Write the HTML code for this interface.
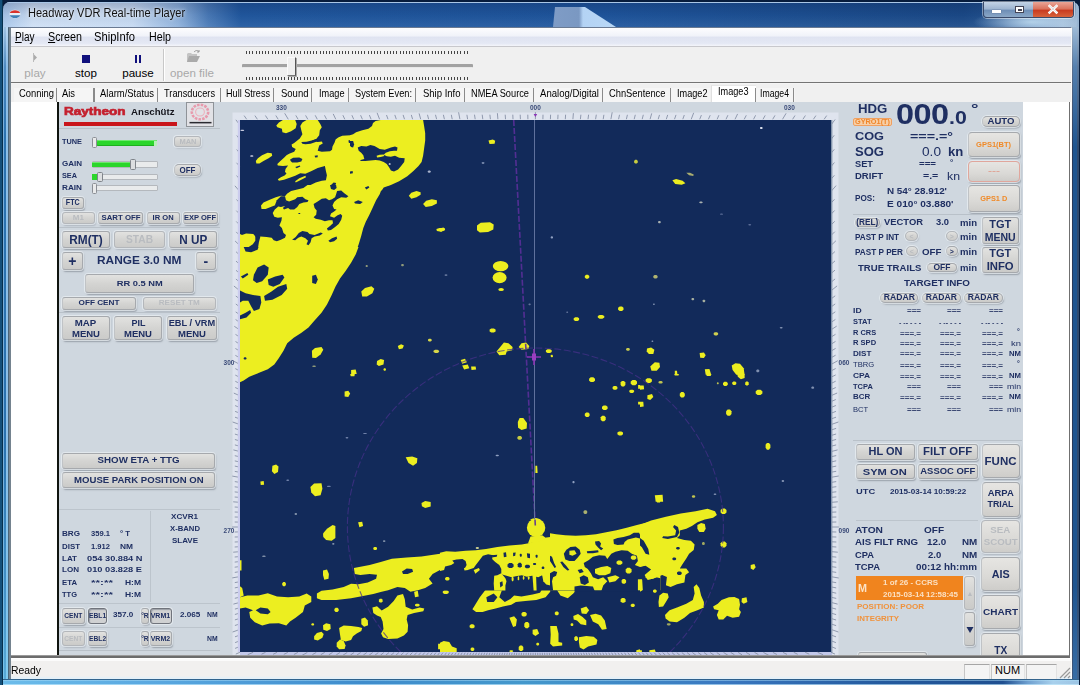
<!DOCTYPE html>
<html lang="en"><head><meta charset="utf-8"><title>Headway VDR Real-time Player</title>
<style>
*{box-sizing:content-box}
html,body{margin:0;padding:0}
body{width:1080px;height:685px;overflow:hidden;position:relative;background:#071c3c;font-family:"Liberation Sans",sans-serif;font-size:12px;color:#000}
#frame{position:absolute;left:3px;top:2px;width:1076px;height:683px;border-radius:7px 7px 0 0;
 background:
  linear-gradient(90deg,#a9c8ec 0,#cfe0f5 30px,#c6daf2 130px,#8fb2dc 175px,#4a7bb8 205px,#2159a0 238px,#1f569d 600px,#1d5092 800px,#1b4a88 960px,#245490 1000px,#5f8cbc 1030px,#9dbad6 1060px,#9ab6d2 1075px);
 box-shadow:inset 0 1px 0 #a9c6e6}
#tshade{position:absolute;left:3px;top:3px;width:1073px;height:24px;background:linear-gradient(180deg,rgba(0,10,50,.2) 0,rgba(0,10,50,.05) 50%,rgba(255,255,255,.06) 100%)}
#tblob{position:absolute;left:553px;top:7px;width:63px;height:20px;background:linear-gradient(90deg,#7f9cc6 0,#7a98c2 26px,#b4d3f4 30px,#b9d8f6 100%);clip-path:polygon(2px 0,32px 0,63px 20px,0 20px);filter:blur(.7px)}
#capglow{position:absolute;left:960px;top:10px;width:130px;height:24px;background:radial-gradient(ellipse closest-side at 55% 50%,rgba(200,226,244,.8) 0,rgba(190,215,238,.5) 50%,rgba(160,190,220,0) 100%);clip-path:inset(0 13px 7px 0)}
#frame:before{content:"";position:absolute;left:0;top:25px;width:5px;bottom:0;
 background:linear-gradient(180deg,rgba(200,222,244,.75) 0,rgba(140,180,225,.35) 40px,rgba(0,0,0,0) 110px,rgba(0,0,0,0) 420px,rgba(110,200,240,.35) 560px,rgba(120,210,245,.6) 660px),
            linear-gradient(90deg,#7ab0dc 0,#7ab0dc 1px,#2a72b0 1.2px,#2a72b0 2.9px,#8cc0e8 3.3px,#8cc0e8 5px)}
#frame:after{content:"";position:absolute;right:0;top:25px;width:7px;bottom:0;
 background:linear-gradient(180deg,rgba(190,212,232,.8) 0,rgba(150,180,212,.45) 40px,rgba(0,0,0,0) 120px,rgba(0,0,0,0) 560px,rgba(120,170,220,.3) 660px),
            linear-gradient(90deg,#2a3a5a 0,#2a3a5a 1px,#1f5590 1.4px,#1f5590 4.6px,#304a6e 5.2px,#304a6e 7px)}
#outL{position:absolute;left:0;top:0;width:3px;height:685px;background:linear-gradient(90deg,#14507a 0,#14507a 1.5px,#06304e 1.8px,#06304e 3px)}
#cl2{position:absolute;left:9px;top:28px;width:1.7px;height:651px;background:#74838f}
#bframe{position:absolute;left:3px;top:678.6px;width:1076px;height:6.4px;
 background:linear-gradient(180deg,rgba(44,92,132,.9) 0,rgba(44,92,132,.9) 1px,rgba(170,220,246,.5) 1px,rgba(170,220,246,.5) 2px,rgba(0,0,0,0) 2px,rgba(0,0,0,0) 4.9px,rgba(205,240,255,.6) 4.9px),
 linear-gradient(90deg,#6cbcea 0,#5aa8e0 150px,#3f8ccc 360px,#4498cc 520px,#3a78c0 720px,#245a9e 880px,#1f4f90 1000px,#6fa0d0 1025px,#a8d0ec 1050px,#9cc4e4 1076px)}
 background:linear-gradient(90deg,#6cbcea 0,#5aa8e0 150px,#3f86cc 360px,#4a90d2 540px,#3a78c0 720px,#245a9e 880px,#1f4f90 1000px,#6fa0d0 1025px,#a8d0ec 1050px,#9cc4e4 1076px)}
#titleglow{position:absolute;left:14px;top:3px;width:200px;height:23px;background:radial-gradient(ellipse at 45% 50%,rgba(255,255,255,.8) 0,rgba(255,255,255,.55) 45%,rgba(255,255,255,0) 72%)}
#title{position:absolute;left:28px;top:6px;font-size:12px;color:#111;white-space:nowrap;text-shadow:0 0 4px #fff}
#capbtns{position:absolute;left:983px;top:2px;width:89px;height:15px;border:1px solid #3a4a6a;border-top:none;border-radius:0 0 4px 4px;overflow:hidden;box-shadow:0 0 0 1px rgba(255,255,255,.45)}
.cb{position:absolute;top:0;height:16px;background:linear-gradient(180deg,#c3d3e6 0,#9db4d0 45%,#6d8db5 50%,#8fabc9 100%);border-right:1px solid #3a4a6a}
.cb.close{background:linear-gradient(180deg,#e9a597 0,#d9705a 45%,#c8391f 50%,#d9683f 100%);border-right:none}
#client{position:absolute;left:8px;top:27px;width:1064px;height:653px;background:#fff;border:1px solid #4a6478;border-top-color:#6a7a92;border-right-color:#fafafa;border-bottom-color:#5a7088;box-sizing:border-box}
#menubar{position:absolute;left:0;top:0;width:1062px;height:18px;background:linear-gradient(180deg,#fdfdfe 0,#f0f2f9 45%,#dfe3f1 50%,#e4e8f4 85%,#f4f5fa 100%);border-bottom:1px solid #c8c8cc;font-size:12px}
#menubar span{position:absolute;top:2px;white-space:nowrap}
#toolbar{position:absolute;left:0;top:19px;width:1062px;height:35px;background:#f0f0f0;border-bottom:1px solid #747474}
.tl{position:absolute;top:19px;text-align:center;font-size:11.6px;color:#000;white-space:nowrap}
.tl.dis{color:#a8a8a8}
.ticks{position:absolute;background:repeating-linear-gradient(90deg,#1a1a1a 0,#1a1a1a 1.1px,transparent 1.1px,transparent 3.2px);opacity:.8}
#tabs{position:absolute;left:0;top:55px;width:1062px;height:18px;background:#f0f0f0;border-top:1px solid #f4f4f4}
.tab{position:absolute;font-size:11px;white-space:nowrap;color:#000}
#content{position:absolute;left:1px;top:74px;width:1059px;height:554px;background:#fff;border-bottom:2.2px solid #6c6c6c;border-right:1px solid #707070;overflow:hidden}
#content:after{content:"";position:absolute;left:0;right:0;bottom:0;height:1px;background:#9a9a9a}
#lwhite{position:absolute;left:47px;top:0;width:2px;height:555px;background:#10140f}
#status{position:absolute;left:0;top:630.5px;width:1062px;height:21px;background:linear-gradient(180deg,#fbfbfb 0,#fbfbfb 2px,#f1f0ef 2.5px,#f1f0ef 17px,#e6f0f7 18.5px);font-size:12px}
.sp{position:absolute;top:5px;height:15px;border-top:1px solid #a6a6a6;border-left:1px solid #c6c6c6;border-right:1px solid #e2e2e2;background:#f4f4f4}

#abs{position:absolute;left:-10px;top:-102px;width:1080px;height:685px;filter:blur(.4px)}
#lp{position:absolute;left:59px;top:102px;width:963.5px;height:554px;background:#cfd7df}
#rp{position:absolute;left:831px;top:102px;width:191.5px;height:555px;background:#cfd7df}
#rp2{display:none}
.t{position:absolute;white-space:nowrap;line-height:1;transform-origin:0 50%;}
.b{position:absolute;box-sizing:border-box;border-radius:3px;background:linear-gradient(180deg,#e2e2e0 0,#d4d4d2 50%,#cbcbc9 100%);border:1px solid #a6a9ad;border-left-color:#c0c3c6;
   box-shadow:0 0 0 1px rgba(232,237,242,.75), 1px 1.5px 1.5px rgba(110,116,128,.55);display:flex;flex-direction:column;align-items:center;justify-content:center;color:#1f2f62;font-weight:bold;white-space:nowrap;line-height:1}
.b span{display:block;transform-origin:50% 50%}
.b.dis{color:#b9bcc0;box-shadow:0 0 0 1px rgba(232,237,242,.75), 1px 1.5px 1.5px rgba(110,116,128,.3);border-color:#b4b7bb}
.b.rnd{border-radius:5px}
.b.big{border-radius:4px;background:linear-gradient(180deg,#e6e5e2 0,#dad9d6 60%,#cecdca 100%)}
.b.red{border-color:#e0a69c}
.b.prs{border-color:#70747c;box-shadow:inset 1px 1px 1px #9a9ea6, 0 0 0 1px rgba(232,237,242,.75);background:#d0d1d2}

#radar{position:absolute;left:220px;top:102px}
</style></head>
<body>
<div id="outL"></div><div id="frame"></div>
<div id="tshade"></div><div id="titleglow"></div><div id="tblob"></div><div id="capglow"></div>
<svg style="position:absolute;left:9px;top:9px" width="12" height="10" viewBox="0 0 12 10"><ellipse cx="6" cy="5" rx="5.5" ry="4.2" fill="#e8eef6"/><path d="M0.8 4 A5.5 4.2 0 0 1 11.2 4 Z" fill="#d8322c"/><path d="M0.8 6.2 A5.5 4.2 0 0 0 11.2 6.2 Z" fill="#3f7fb5"/></svg>
<div id="title" style="transform:scaleX(0.920);transform-origin:0 50%;display:inline-block;">Headway VDR Real-time Player</div>
<div id="capbtns"><div class="cb" style="left:0;width:25px"><i style="position:absolute;left:8px;top:8px;width:9px;height:3px;background:#fff;box-shadow:0 0 1px #335"></i></div><div class="cb" style="left:25px;width:24px"><i style="position:absolute;left:6px;top:4px;width:9px;height:7px;border:1px solid #445;background:#fff;box-sizing:border-box"></i><i style="position:absolute;left:9px;top:7px;width:4px;height:2px;background:#445"></i></div><div class="cb close" style="left:49px;width:40px"><svg width="40" height="15" style="position:absolute;left:0;top:0"><path d="M16.5 4 L23.5 10.5 M23.5 4 L16.5 10.5" stroke="#fff" stroke-width="2.4" stroke-linecap="square"/><path d="M16 3.5 L24 10.5 M24 3.5 L16 10.5" stroke="#556" stroke-width="0.5" fill="none" opacity=".4"/></svg></div></div>
<div id="client">
<div id="menubar"><span style="left:6px;transform:scaleX(0.835);transform-origin:0 50%;display:inline-block;"><u>P</u>lay</span><span style="left:39px;transform:scaleX(0.894);transform-origin:0 50%;display:inline-block;"><u>S</u>creen</span><span style="left:85px;transform:scaleX(0.931);transform-origin:0 50%;display:inline-block;">ShipInfo</span><span style="left:140px;transform:scaleX(0.891);transform-origin:0 50%;display:inline-block;">Help</span></div>
<div id="toolbar"><svg style="position:absolute;left:23px;top:6px" width="6" height="9"><path d="M1 0 L1 9 L2 9 L2 0Z" fill="#bbb"/><path d="M2 1.5 L5 4.5 L2 7.5Z" fill="#aaa"/></svg><span class="tl dis" style="left:8px;width:36px">play</span><i style="position:absolute;left:73px;top:8px;width:8px;height:8px;background:#10107c"></i><span class="tl" style="left:56px;width:42px">stop</span><i style="position:absolute;left:126px;top:8px;width:2px;height:8px;background:#10107c"></i><i style="position:absolute;left:130px;top:8px;width:2px;height:8px;background:#10107c"></i><span class="tl" style="left:106px;width:46px">pause</span><i style="position:absolute;left:154px;top:2px;width:1px;height:32px;background:#c8c8c8"></i><i style="position:absolute;left:155px;top:2px;width:1px;height:32px;background:#fff"></i><svg style="position:absolute;left:177px;top:3px" width="15" height="13" viewBox="0 0 15 13"><path d="M1 4 L1 12 L11 12 L11 4 L6 4 L5 3 L2 3 Z" fill="#c4c4c4"/><path d="M3 6 L14 6 L11 12 L1 12 Z" fill="#aaa"/><path d="M8 2 C10 0 12 0 13 2 M13 2 l-2 0 M13 2 l0 -2" stroke="#999" fill="none" stroke-width="1"/></svg><span class="tl dis" style="left:158px;width:50px">open file</span><div class="ticks" style="left:237px;top:4px;width:223px;height:3px"></div><div class="ticks" style="left:237px;top:29.5px;width:223px;height:3.5px"></div><div style="position:absolute;left:233px;top:17px;width:231px;height:3px;background:#a2a2a2;border-bottom:1px solid #e8e8e8;border-radius:1px"></div><div style="position:absolute;left:277.7px;top:9.6px;width:9.3px;height:19.4px;background:#efefef;border-right:1px solid #555;border-bottom:1px solid #777;border-left:1px solid #fafafa;border-top:1px solid #fafafa;box-sizing:border-box;box-shadow:1px 1px 0 #aaa"></div></div>
<div id="tabs"><div style="position:absolute;left:5px;top:4px;width:696px;height:15px;background:#f5f5f5"></div><div style="position:absolute;left:747px;top:4px;width:39px;height:15px;background:#f5f5f5"></div><div style="position:absolute;left:702px;top:1px;width:44px;height:19px;background:#fff;border-left:1px solid #e0e0e0;border-top:1px solid #e8e8e8"></div><span class="tab" style="left:10.0px;top:3px;transform:scaleX(0.854);transform-origin:0 50%;display:inline-block;">Conning</span><i style="position:absolute;left:47.0px;top:4px;width:1px;height:14px;background:#8a8a8a"></i><span class="tab" style="left:53.0px;top:3px;transform:scaleX(0.851);transform-origin:0 50%;display:inline-block;">Ais</span><i style="position:absolute;left:84.0px;top:4px;width:2px;height:14px;background:#8a8a8a"></i><span class="tab" style="left:90.5px;top:3px;transform:scaleX(0.858);transform-origin:0 50%;display:inline-block;">Alarm/Status</span><i style="position:absolute;left:148.0px;top:4px;width:1px;height:14px;background:#8a8a8a"></i><span class="tab" style="left:155.0px;top:3px;transform:scaleX(0.840);transform-origin:0 50%;display:inline-block;">Transducers</span><i style="position:absolute;left:210.5px;top:4px;width:1px;height:14px;background:#8a8a8a"></i><span class="tab" style="left:217.0px;top:3px;transform:scaleX(0.827);transform-origin:0 50%;display:inline-block;">Hull Stress</span><i style="position:absolute;left:264.0px;top:4px;width:1px;height:14px;background:#8a8a8a"></i><span class="tab" style="left:272.0px;top:3px;transform:scaleX(0.864);transform-origin:0 50%;display:inline-block;">Sound</span><i style="position:absolute;left:302.0px;top:4px;width:1px;height:14px;background:#8a8a8a"></i><span class="tab" style="left:309.5px;top:3px;transform:scaleX(0.834);transform-origin:0 50%;display:inline-block;">Image</span><i style="position:absolute;left:339.0px;top:4px;width:1px;height:14px;background:#8a8a8a"></i><span class="tab" style="left:345.5px;top:3px;transform:scaleX(0.840);transform-origin:0 50%;display:inline-block;">System Even:</span><i style="position:absolute;left:405.5px;top:4px;width:1px;height:14px;background:#8a8a8a"></i><span class="tab" style="left:413.5px;top:3px;transform:scaleX(0.864);transform-origin:0 50%;display:inline-block;">Ship Info</span><i style="position:absolute;left:454.5px;top:4px;width:1px;height:14px;background:#8a8a8a"></i><span class="tab" style="left:462.0px;top:3px;transform:scaleX(0.839);transform-origin:0 50%;display:inline-block;">NMEA Source</span><i style="position:absolute;left:524.0px;top:4px;width:1px;height:14px;background:#8a8a8a"></i><span class="tab" style="left:531.0px;top:3px;transform:scaleX(0.869);transform-origin:0 50%;display:inline-block;">Analog/Digital</span><i style="position:absolute;left:593.0px;top:4px;width:1px;height:14px;background:#8a8a8a"></i><span class="tab" style="left:600.0px;top:3px;transform:scaleX(0.847);transform-origin:0 50%;display:inline-block;">ChnSentence</span><i style="position:absolute;left:661.0px;top:4px;width:1px;height:14px;background:#8a8a8a"></i><span class="tab" style="left:667.5px;top:3px;transform:scaleX(0.831);transform-origin:0 50%;display:inline-block;">Image2</span><span class="tab" style="left:708.5px;top:1px;transform:scaleX(0.831);transform-origin:0 50%;display:inline-block;">Image3</span><i style="position:absolute;left:745.5px;top:4px;width:1px;height:14px;background:#8a8a8a"></i><span class="tab" style="left:751.0px;top:3px;transform:scaleX(0.790);transform-origin:0 50%;display:inline-block;">Image4</span><i style="position:absolute;left:784.0px;top:4px;width:1px;height:14px;background:#8a8a8a"></i></div>
<div id="content">
<div id="lwhite"></div>
<div id="abs"><div id="lp"></div><div id="rp"></div><div id="rp2"></div>
<svg id="radar" width="640" height="556" viewBox="220 102 640 556">
<defs><clipPath id="rc"><rect x="240" y="120" width="591" height="532"/></clipPath></defs>
<rect x="232.5" y="112.5" width="606" height="544" fill="#dfe4ee"/><rect x="240" y="652" width="592" height="4" fill="#c2c8ea"/>
<rect x="240" y="120" width="591" height="532" fill="#122a5a"/>
<g clip-path="url(#rc)" shape-rendering="geometricPrecision">
<polygon points="276.3,125.6 278.9,122.6 282.9,120.0 295.2,120.0 296.7,124.1 295.7,128.2 291.1,131.2 286.0,133.3 282.4,132.3 281.9,128.7 277.3,127.2" fill="#ecee20"/>
<polygon points="255.8,160.9 257.9,158.3 262.0,155.3 267.6,152.7 271.7,153.2 272.2,155.8 268.6,158.3 263.5,160.9 259.4,163.5 256.4,163.5" fill="#ecee20"/>
<polygon points="302.4,122.6 306.5,120.0 317.7,120.0 320.3,124.1 321.8,127.2 319.8,130.2 319.2,135.3 316.2,138.9 311.6,141.0 317.7,142.0 321.8,141.5 322.8,143.5 319.2,145.6 317.7,150.7 321.8,151.7 330.0,151.2 332.0,149.7 332.5,146.6 334.6,142.5 335.6,139.4 338.2,137.4 342.2,135.8 350.4,135.3 350.4,190.6 303.4,190.6 309.5,185.4 315.7,182.4 321.8,180.8 325.9,180.3 326.9,175.2 325.9,171.1 324.9,166.0 317.7,168.1 311.6,171.1 305.4,173.7 300.3,173.2 295.2,175.7 291.1,177.3 284.0,179.8 278.9,180.8 277.8,179.3 280.9,177.3 285.0,175.2 286.5,173.2 285.0,172.1 285.5,169.1 288.1,165.5 282.9,166.0 277.8,165.5 277.3,164.0 280.4,160.9 284.0,157.8 286.5,155.3 289.1,153.7 294.2,151.7 295.7,149.1 292.1,147.1 291.6,144.5 294.2,143.0 297.3,140.4 299.8,138.4 302.4,134.3 301.3,130.2 300.3,126.1" fill="#ecee20"/>
<polygon points="295.2,181.3 299.3,178.3 305.4,175.7 306.0,177.3 300.3,180.3 295.7,182.6" fill="#ecee20"/>
<polygon points="290.1,159.4 293.2,157.8 299.3,157.6 302.4,158.9 301.3,161.4 297.3,162.4 292.1,162.4 290.6,160.9" fill="#122a5a"/>
<polygon points="295.2,167.0 299.8,165.5 300.3,166.5 296.7,168.3" fill="#122a5a"/>
<polygon points="314.6,155.8 317.7,155.3 317.7,157.3 315.2,157.6" fill="#122a5a"/>
<polygon points="301.3,142.0 306.5,141.7 311.6,140.4 316.2,138.9 317.7,139.9 315.7,142.0 310.6,143.7 305.4,144.3 302.4,143.7" fill="#122a5a"/>
<polygon points="348.4,140.4 350.4,139.9 350.4,143.0 348.9,143.0" fill="#122a5a"/>
<polygon points="330.5,185.4 333.6,182.4 336.1,182.9 335.1,186.5 332.5,190.6 330.5,190.6" fill="#122a5a"/>
<polygon points="241.5,129.7 243.1,129.7 244.1,130.1 244.1,130.7 243.1,131.0 241.5,131.0 240.5,130.7 240.5,130.1" fill="#c8cce0"/>
<polygon points="251.1,155.3 252.4,155.3 253.3,155.7 253.3,156.4 252.4,156.8 251.1,156.8 250.2,156.4 250.2,155.7" fill="#c8cce0"/>
<polygon points="350.0,135.3 353.1,134.3 356.1,132.3 362.3,130.2 368.4,128.7 372.0,126.1 373.0,123.1 375.6,121.0 380.7,120.0 423.1,120.0 424.1,126.1 425.2,133.3 425.2,140.4 424.1,148.6 423.1,155.8 421.6,161.9 418.5,166.0 413.4,171.1 407.3,176.2 399.1,181.3 390.9,184.9 383.7,187.5 381.7,190.6 350.0,190.6" fill="#ecee20"/>
<polygon points="357.7,147.6 361.2,146.1 366.4,146.4 370.4,145.1 374.5,146.1 379.7,149.1 384.8,149.7 390.9,147.6 395.0,146.4 397.5,147.6 397.0,150.7 394.0,150.7 389.9,151.2 385.8,152.7 383.7,154.8 386.8,156.3 390.9,156.8 395.0,155.8 399.1,157.8 404.7,158.3 404.2,161.9 401.1,166.0 398.1,169.6 394.0,171.6 390.9,170.6 388.9,167.0 386.8,164.0 383.7,161.9 379.7,160.4 375.6,159.9 370.4,160.4 365.3,160.9 360.2,160.9 360.7,159.9 364.3,158.9 363.3,155.3 361.2,152.7 358.7,150.7" fill="#122a5a"/>
<polygon points="350.0,141.0 353.1,141.0 354.1,144.5 353.1,147.6 351.0,147.1 350.0,145.6" fill="#122a5a"/>
<polygon points="350.0,171.6 352.6,171.1 352.9,173.2 350.0,173.7" fill="#122a5a"/>
<polygon points="365.3,186.5 368.9,185.4 369.4,187.5 366.4,188.7" fill="#122a5a"/>
<polygon points="376.6,155.8 379.7,154.8 383.7,154.6 384.3,156.0 380.7,157.0 377.1,157.6" fill="#ecee20"/>
<polygon points="428.6,170.6 429.9,170.6 430.8,171.2 430.8,172.1 429.9,172.7 428.6,172.7 427.7,172.1 427.7,171.2" fill="#aab4cc"/>
<polygon points="389.2,163.1 390.1,163.1 390.7,163.7 390.7,164.5 390.1,165.0 389.2,165.0 388.7,164.5 388.7,163.7" fill="#aab4cc"/>
<polygon points="307.5,185.0 350.4,185.0 350.4,255.6 240.0,255.6 240.0,234.1 242.0,235.1 246.1,233.6 253.3,234.1 256.9,238.2 260.4,236.6 266.6,237.1 271.7,237.7 273.7,240.2 276.8,241.2 280.9,239.7 285.0,237.7 286.0,235.1 283.5,233.1 281.9,227.9 279.4,225.4 281.4,220.8 281.9,217.2 277.8,217.7 274.3,216.7 272.7,213.1 274.8,209.5 278.3,206.5 275.8,204.9 270.7,207.0 265.6,209.0 261.5,209.0 261.0,205.4 263.5,202.4 269.7,199.8 275.8,197.3 280.9,195.7 285.0,196.2 287.0,193.7 291.1,191.1 297.3,189.6 303.4,188.1" fill="#ecee20"/>
<polygon points="255.3,236.1 260.4,236.6 258.9,242.3 257.9,248.4 254.3,251.5 249.2,253.3 245.1,252.0 244.6,249.4 248.7,246.9 252.8,244.3 255.3,240.7" fill="#122a5a"/>
<polygon points="284.5,203.4 286.0,200.3 289.1,201.4 295.2,199.3 297.3,197.3 302.4,196.8 305.4,199.3 308.5,200.3 307.5,201.9 303.4,202.4 299.3,203.9 297.3,207.0 294.2,209.5 290.1,209.5 288.1,208.0 284.0,209.5 282.9,208.0 285.0,206.0" fill="#122a5a"/>
<polygon points="274.8,205.4 276.8,200.3 280.9,196.2 285.0,196.2 286.0,200.3 285.0,206.0 280.9,207.0 278.3,206.5" fill="#122a5a"/>
<polygon points="313.6,203.9 317.7,201.4 321.8,198.8 325.9,198.3 329.0,200.3 332.0,199.3 335.1,197.3 336.1,194.2 337.1,191.1 341.2,190.6 344.3,193.2 348.4,196.2 346.3,197.8 341.2,197.3 337.1,199.3 334.1,201.9 332.5,205.4 334.1,209.0 336.6,209.5 334.1,211.6 331.0,213.6 330.0,216.2 334.1,217.7 337.6,215.2 340.7,214.1 342.2,215.7 341.2,219.8 338.7,223.9 335.1,226.9 331.0,230.0 327.9,230.5 326.9,228.5 330.0,225.9 333.0,223.3 332.5,220.3 329.0,220.3 324.9,221.3 320.8,219.8 315.7,218.7 313.6,217.2 316.2,214.7 316.7,210.6 314.6,208.0" fill="#122a5a"/>
<polygon points="330.0,185.0 336.1,185.0 336.6,188.1 334.1,190.1 331.0,189.1" fill="#122a5a"/>
<polygon points="292.1,239.7 295.7,237.1 298.8,233.1 302.4,231.0 307.5,232.0 309.5,234.1 314.6,235.1 320.8,232.5 322.8,233.6 319.8,235.6 314.6,236.6 311.6,238.2 310.6,242.3 308.5,245.3 306.5,244.3 308.0,240.7 305.4,238.2 301.3,236.6 298.3,237.7 295.2,240.2" fill="#122a5a"/>
<polygon points="328.4,240.7 332.0,238.2 336.6,236.6 337.1,238.7 334.1,241.2 330.0,242.3" fill="#122a5a"/>
<polygon points="298.9,213.1 299.8,213.1 300.3,213.4 300.3,213.9 299.8,214.1 298.9,214.1 298.3,213.9 298.3,213.4" fill="#122a5a"/>
<polygon points="350.0,185.0 389.9,185.0 383.7,186.5 381.7,189.1 379.7,194.2 376.1,200.3 373.0,207.0 369.4,214.7 365.8,221.8 363.3,227.9 361.2,236.1 358.7,244.3 356.1,251.5 354.6,255.6 350.0,255.6" fill="#ecee20"/>
<polygon points="408.8,195.7 411.3,192.7 416.5,191.1 420.6,192.2 420.6,194.7 416.5,197.3 411.3,198.8" fill="#ecee20"/>
<polygon points="423.1,203.9 426.2,200.8 431.8,199.3 436.9,200.3 436.9,203.4 431.8,206.0 425.7,207.0" fill="#ecee20"/>
<polygon points="436.4,229.0 439.5,227.9 444.6,227.9 445.1,230.0 441.0,231.8 436.9,231.0" fill="#ecee20"/>
<polygon points="364.8,187.6 368.4,186.0 369.4,187.6 366.4,189.6" fill="#122a5a"/>
<polygon points="354.1,201.9 358.2,200.3 362.8,201.9 360.2,203.9 355.1,203.6" fill="#122a5a"/>
<polygon points="240.0,247.0 358.5,247.0 355.7,254.4 351.1,262.7 345.6,271.1 340.0,278.5 335.4,286.8 331.7,295.1 327.0,304.4 321.5,312.7 314.1,321.1 308.5,327.6 301.1,333.1 293.7,337.7 287.2,343.3 283.5,350.7 278.9,358.1 274.3,364.6 267.8,369.2 258.5,372.9 251.1,373.9 240.0,377.6 240.0,247.0" fill="#ecee20"/>
<polygon points="243.7,247.0 258.5,247.0 257.6,249.8 251.1,252.2 245.6,251.6" fill="#122a5a"/>
<polygon points="253.9,274.8 257.6,267.4 264.1,264.6 268.7,267.4 267.8,274.8 262.2,281.3 256.7,283.1 253.0,280.3" fill="#122a5a"/>
<polygon points="267.8,279.4 275.2,276.6 282.6,274.8 284.4,277.6 279.8,284.0 273.3,286.8 268.7,285.0" fill="#122a5a"/>
<polygon points="264.1,296.1 271.5,291.4 278.0,286.8 286.3,284.0 287.2,288.7 281.7,295.1 272.4,299.8 265.0,300.7" fill="#122a5a"/>
<polygon points="240.0,290.5 245.6,293.3 253.0,295.1 260.4,296.1 261.3,302.6 259.4,309.0 253.9,310.9 251.1,306.3 248.3,300.7 242.8,300.7 240.0,302.6" fill="#122a5a"/>
<polygon points="240.0,315.5 245.6,312.7 250.2,310.0 251.1,312.7 246.5,317.4 240.0,319.2" fill="#122a5a"/>
<polygon points="240.9,276.6 247.4,272.9 248.3,274.8 242.8,278.5" fill="#122a5a"/>
<polygon points="312.2,275.7 315.9,274.8 317.8,279.4 315.9,284.0 312.2,283.1" fill="#122a5a"/>
<polygon points="244.5,357.2 245.7,357.2 246.5,357.9 246.5,358.9 245.7,359.6 244.5,359.6 243.7,358.9 243.7,357.9" fill="#122a5a"/>
<polygon points="361.3,291.4 365.0,288.1 371.5,286.3 374.3,288.7 372.4,293.3 366.9,296.6 362.2,296.6" fill="#ecee20"/>
<polygon points="311.9,350.7 315.0,347.9 321.5,347.0 323.3,349.8 320.6,354.4 315.9,358.1 312.2,357.7" fill="#ecee20"/>
<polygon points="377.0,360.9 380.7,359.0 384.1,360.0 383.5,364.6 378.9,365.9 376.7,364.6" fill="#ecee20"/>
<polygon points="397.8,346.1 401.1,344.2 403.9,345.5 402.6,348.5 398.9,349.2" fill="#ecee20"/>
<polygon points="351.1,370.1 355.7,369.6 356.7,373.9 351.1,373.9" fill="#ecee20"/>
<polygon points="384.2,368.3 385.3,368.3 385.9,369.0 385.9,370.0 385.3,370.7 384.2,370.7 383.5,370.0 383.5,369.0" fill="#ecee20"/>
<polygon points="429.0,338.7 430.6,338.7 431.7,339.4 431.7,340.7 430.6,341.4 429.0,341.4 428.0,340.7 428.0,339.4" fill="#d8d84a"/>
<polygon points="435.1,349.8 437.5,349.8 439.1,350.7 439.1,352.0 437.5,352.9 435.1,352.9 433.5,352.0 433.5,350.7" fill="#d8d84a"/>
<polygon points="401.9,264.0 403.1,264.0 403.9,264.7 403.9,265.6 403.1,266.3 401.9,266.3 401.1,265.6 401.1,264.7" fill="#8f9a7a"/>
<polygon points="313.3,365.5 314.9,365.5 315.9,365.9 315.9,366.6 314.9,367.0 313.3,367.0 312.2,366.6 312.2,365.9" fill="#8f9a7a"/>
<polygon points="366.2,265.1 367.2,265.1 367.8,265.7 367.8,266.5 367.2,267.0 366.2,267.0 365.6,266.5 365.6,265.7" fill="#8f9a7a"/>
<polygon points="240.0,373.1 258.5,373.1 249.3,376.8 243.7,380.5 240.0,382.3" fill="#ecee20"/>
<polygon points="344.6,391.6 348.3,390.7 350.2,393.4 348.3,397.1 344.6,396.6" fill="#ecee20"/>
<polygon points="350.2,374.0 354.8,374.0 354.4,376.2 350.7,376.2" fill="#ecee20"/>
<polygon points="272.4,465.7 276.1,464.4 278.5,466.6 278.0,472.1 274.3,474.0 271.9,471.2" fill="#ecee20"/>
<polygon points="260.4,481.4 263.7,481.0 264.1,484.7 260.7,485.1" fill="#ecee20"/>
<polygon points="310.4,487.0 314.1,483.6 321.5,483.3 322.4,488.8 320.6,495.3 315.0,496.2 311.3,492.5" fill="#ecee20"/>
<polygon points="405.7,457.3 412.2,456.4 417.4,458.3 416.9,462.9 413.1,465.7 408.5,462.9" fill="#ecee20"/>
<polygon points="346.3,437.0 347.6,437.0 348.3,437.4 348.3,438.0 347.6,438.4 346.3,438.4 345.6,438.0 345.6,437.4" fill="#6f80a8"/>
<polygon points="364.2,432.9 365.8,432.9 366.9,433.2 366.9,433.7 365.8,434.0 364.2,434.0 363.1,433.7 363.1,433.2" fill="#6f80a8"/>
<polygon points="287.1,479.6 288.3,479.6 289.1,480.0 289.1,480.6 288.3,481.0 287.1,481.0 286.3,480.6 286.3,480.0" fill="#6f80a8"/>
<polygon points="328.1,485.7 329.7,485.7 330.7,486.1 330.7,486.7 329.7,487.1 328.1,487.1 327.0,486.7 327.0,486.1" fill="#6f80a8"/>
<polygon points="421.5,502.9 425.2,501.0 430.7,501.9 430.7,506.6 425.2,508.0 421.9,506.2" fill="#ecee20"/>
<polygon points="358.1,522.3 362.2,521.7 363.1,526.0 359.4,527.3" fill="#ecee20"/>
<polygon points="323.0,533.4 327.0,528.8 332.6,525.1 335.4,526.0 335.4,538.0 331.7,540.8 326.1,539.9 323.3,537.1" fill="#ecee20"/>
<polygon points="374.4,546.9 376.0,546.9 377.0,547.8 377.0,549.2 376.0,550.1 374.4,550.1 373.3,549.2 373.3,547.8" fill="#ecee20"/>
<polygon points="323.0,570.4 327.0,569.5 328.9,574.1 328.5,578.8 324.3,579.7 323.0,575.1" fill="#ecee20"/>
<polygon points="283.3,582.1 284.9,582.1 285.9,583.3 285.9,585.0 284.9,586.2 283.3,586.2 282.2,585.0 282.2,583.3" fill="#ecee20"/>
<polygon points="240.0,560.3 241.5,560.3 241.5,570.4 240.0,570.4" fill="#ecee20"/>
<polygon points="240.0,586.2 242.2,588.0 243.7,595.4 240.0,597.3" fill="#ecee20"/>
<polygon points="240.0,597.3 247.4,595.4 258.5,595.4 267.8,593.2 277.0,596.4 288.1,597.3 299.3,596.4 306.7,593.6 311.3,596.4 311.3,601.9 304.8,605.6 303.0,612.1 295.6,617.7 290.0,621.4 286.3,625.4 278.9,623.2 269.6,623.6 262.2,625.4 254.8,622.3 250.2,617.7 249.3,612.1 253.0,610.3 245.6,607.5 240.0,608.4" fill="#ecee20"/>
<polygon points="353.9,568.0 369.6,564.9 380.7,562.1 391.9,558.8 406.7,557.5 421.5,556.6 440.0,553.8 440.0,569.9 432.6,574.1 428.9,578.8 432.6,583.4 425.2,588.0 417.8,590.3 410.4,591.7 404.8,588.0 397.4,587.1 388.1,590.3 380.7,592.1 373.3,594.0 360.4,596.4 351.1,598.2 336.3,600.1 321.5,600.1 316.9,598.2 316.9,593.6 321.5,590.8 332.6,589.5 343.7,587.1 351.1,583.8 358.5,584.3 367.8,582.5 376.1,578.8 377.0,574.7 369.6,574.1 360.4,575.1 354.8,574.1" fill="#ecee20"/>
<polygon points="414.1,591.7 417.8,590.8 418.7,596.4 415.0,597.3" fill="#ecee20"/>
<polygon points="335.6,607.7 337.5,607.7 338.7,608.9 338.7,610.7 337.5,611.9 335.6,611.9 334.4,610.7 334.4,608.9" fill="#ecee20"/>
<polygon points="416.3,603.8 418.3,603.8 419.6,604.6 419.6,605.8 418.3,606.6 416.3,606.6 415.0,605.8 415.0,604.6" fill="#ecee20"/>
<polygon points="379.9,598.8 381.6,598.8 382.6,599.8 382.6,601.4 381.6,602.5 379.9,602.5 378.9,601.4 378.9,599.8" fill="#ecee20"/>
<polygon points="255.7,610.3 260.4,607.5 267.8,608.4 270.6,612.1 267.8,614.3 260.4,613.6" fill="#122a5a"/>
<polygon points="402.0,571.4 406.7,568.6 412.2,569.1 413.1,571.7 407.6,574.1 403.0,574.1" fill="#122a5a"/>
<polygon points="295.3,513.0 296.4,513.0 297.0,513.6 297.0,514.4 296.4,514.9 295.3,514.9 294.6,514.4 294.6,513.6" fill="#7f8fa8"/>
<polygon points="263.2,555.6 264.6,555.6 265.6,556.0 265.6,556.7 264.6,557.1 263.2,557.1 262.2,556.7 262.2,556.0" fill="#7f8fa8"/>
<polygon points="383.6,540.3 384.7,540.3 385.4,540.8 385.4,541.6 384.7,542.1 383.6,542.1 383.0,541.6 383.0,540.8" fill="#7f8fa8"/>
<polygon points="332.8,542.9 333.8,542.9 334.4,543.4 334.4,544.2 333.8,544.7 332.8,544.7 332.2,544.2 332.2,543.4" fill="#7f8fa8"/>
<polygon points="372.4,607.6 377.0,606.3 381.7,610.4 388.1,606.7 393.7,601.1 397.4,595.6 403.0,594.1 404.8,599.3 405.7,606.7 412.2,609.4 419.6,607.6 424.3,608.5 423.3,611.3 414.1,613.1 407.6,615.0 406.7,619.6 408.1,625.2 407.6,631.7 403.9,635.4 397.4,638.5 388.1,639.1 383.0,637.2 381.1,633.5 383.5,628.9 382.6,621.5 380.7,616.9 377.0,615.6 373.3,613.1" fill="#ecee20"/>
<polygon points="361.3,618.7 365.0,617.4 367.8,620.6 368.1,625.2 364.1,626.7 361.3,624.3" fill="#ecee20"/>
<polygon points="323.0,625.2 326.1,623.3 330.4,624.3 330.7,628.9 327.0,631.1 323.3,629.8" fill="#ecee20"/>
<polygon points="314.1,636.3 316.9,633.0 321.5,631.7 323.7,634.1 322.4,637.8 317.8,640.4 314.1,639.6" fill="#ecee20"/>
<polygon points="339.1,628.0 343.7,625.6 351.1,626.1 358.5,627.0 362.2,628.0 361.3,631.1 356.7,633.5 353.0,636.3 351.1,640.0 345.6,641.5 340.9,640.0 340.0,634.4" fill="#ecee20"/>
<polygon points="336.7,642.8 340.0,639.6 343.7,640.9 345.6,645.6 344.6,648.9 339.1,649.3 336.7,646.5" fill="#ecee20"/>
<polygon points="438.1,643.7 440.0,643.7 440.0,649.3 438.1,649.3" fill="#ecee20"/>
<polygon points="312.1,623.3 313.3,623.3 314.1,624.0 314.1,624.9 313.3,625.6 312.1,625.6 311.3,624.9 311.3,624.0" fill="#ecee20"/>
<polygon points="488.5,140.4 492.8,139.4 495.2,140.7 494.6,143.7 489.6,144.1" fill="#ecee20"/>
<polygon points="477.0,225.6 480.7,222.8 490.0,222.2 493.7,224.6 493.3,229.6 488.1,232.0 479.8,232.6 477.0,230.2" fill="#ecee20"/>
<polygon points="440.0,228.3 443.7,227.4 444.6,230.2 440.9,231.7 440.0,231.1" fill="#ecee20"/>
<polygon points="635.1,159.8 636.7,159.8 637.8,160.9 637.8,162.5 636.7,163.5 635.1,163.5 634.1,162.5 634.1,160.9" fill="#c8cc40"/>
<polygon points="482.4,162.2 483.7,162.2 484.4,162.6 484.4,163.3 483.7,163.7 482.4,163.7 481.7,163.3 481.7,162.6" fill="#8f9fc0"/>
<polygon points="551.4,236.3 552.3,236.3 553.0,236.9 553.0,237.9 552.3,238.5 551.4,238.5 550.7,237.9 550.7,236.9" fill="#8f9fc0"/>
<ellipse cx="500.6" cy="266.1" rx="7.8" ry="5.2" fill="#ecee20"/>
<ellipse cx="499.6" cy="277.6" rx="7.0" ry="5.6" fill="#ecee20"/>
<ellipse cx="501.1" cy="289.6" rx="2.8" ry="1.5" fill="#ecee20"/>
<polygon points="491.3,328.5 493.9,328.5 495.6,329.6 495.6,331.4 493.9,332.6 491.3,332.6 489.6,331.4 489.6,329.6" fill="#ecee20"/>
<polygon points="496.5,351.6 500.2,347.0 503.9,342.4 508.5,343.3 512.6,347.0 512.2,350.3 506.7,351.6 505.7,354.8 499.3,355.3" fill="#ecee20"/>
<polygon points="518.7,347.0 521.5,343.3 526.1,342.4 529.3,346.1 528.5,348.9 521.5,349.8" fill="#ecee20"/>
<polygon points="547.5,349.2 550.1,349.2 551.7,350.3 551.7,351.9 550.1,352.9 547.5,352.9 545.9,351.9 545.9,350.3" fill="#ecee20"/>
<polygon points="551.4,354.8 552.3,354.8 553.0,355.5 553.0,356.5 552.3,357.2 551.4,357.2 550.7,356.5 550.7,355.5" fill="#ecee20"/>
<polygon points="460.7,360.0 465.0,358.7 466.9,362.2 462.2,363.7" fill="#ecee20"/>
<polygon points="462.2,365.5 467.8,364.6 469.3,368.3 464.1,369.6" fill="#ecee20"/>
<polygon points="471.1,366.4 475.6,366.4 476.1,369.6 471.5,370.1" fill="#ecee20"/>
<polygon points="586.1,274.8 588.0,274.8 589.3,275.9 589.3,277.6 588.0,278.7 586.1,278.7 584.8,277.6 584.8,275.9" fill="#ecee20"/>
<polygon points="619.7,306.6 622.0,306.6 623.5,307.8 623.5,309.7 622.0,310.9 619.7,310.9 618.1,309.7 618.1,307.8" fill="#ecee20"/>
<polygon points="599.6,315.0 602.4,315.0 604.3,316.0 604.3,317.6 602.4,318.7 599.6,318.7 597.8,317.6 597.8,316.0" fill="#ecee20"/>
<polygon points="575.2,317.2 577.6,317.2 579.1,318.2 579.1,319.9 577.6,320.9 575.2,320.9 573.7,319.9 573.7,318.2" fill="#ecee20"/>
<polygon points="627.1,347.9 628.8,347.9 629.8,348.7 629.8,349.9 628.8,350.7 627.1,350.7 626.1,349.9 626.1,348.7" fill="#c8cc50"/>
<polygon points="445.4,274.2 446.6,274.2 447.4,274.7 447.4,275.6 446.6,276.1 445.4,276.1 444.6,275.6 444.6,274.7" fill="#62749a"/>
<polygon points="529.1,303.5 530.1,303.5 530.7,304.0 530.7,304.8 530.1,305.3 529.1,305.3 528.5,304.8 528.5,304.0" fill="#62749a"/>
<polygon points="566.8,311.4 567.6,311.4 568.1,311.9 568.1,312.5 567.6,312.9 566.8,312.9 566.3,312.5 566.3,311.9" fill="#62749a"/>
<polygon points="517.8,422.1 519.6,418.1 523.3,418.1 527.0,423.1 526.7,428.6 521.5,429.9 518.1,427.7" fill="#ecee20"/>
<polygon points="535.4,465.7 537.2,465.7 537.6,473.1 535.4,473.1" fill="#ecee20"/>
<polygon points="590.7,377.3 593.3,377.3 595.0,378.7 595.0,380.8 593.3,382.1 590.7,382.1 589.1,380.8 589.1,378.7" fill="#ecee20"/>
<polygon points="621.9,381.0 624.0,381.0 625.4,382.6 625.4,385.0 624.0,386.6 621.9,386.6 620.6,385.0 620.6,382.6" fill="#ecee20"/>
<polygon points="632.5,379.9 635.3,379.9 637.0,381.4 637.0,383.8 635.3,385.3 632.5,385.3 630.7,383.8 630.7,381.4" fill="#ecee20"/>
<polygon points="613.9,386.0 616.1,386.0 617.4,387.1 617.4,388.7 616.1,389.7 613.9,389.7 612.6,388.7 612.6,387.1" fill="#ecee20"/>
<polygon points="630.6,389.7 632.7,389.7 634.1,390.6 634.1,392.0 632.7,392.9 630.6,392.9 629.3,392.0 629.3,390.6" fill="#ecee20"/>
<polygon points="603.6,405.5 606.0,405.5 607.6,406.8 607.6,408.8 606.0,410.1 603.6,410.1 602.0,408.8 602.0,406.8" fill="#ecee20"/>
<polygon points="586.2,412.5 588.3,412.5 589.6,413.8 589.6,415.7 588.3,417.0 586.2,417.0 584.8,415.7 584.8,413.8" fill="#ecee20"/>
<polygon points="602.1,415.7 604.3,415.7 605.7,417.2 605.7,419.7 604.3,421.2 602.1,421.2 600.7,419.7 600.7,417.2" fill="#ecee20"/>
<polygon points="619.0,431.4 621.4,431.4 623.0,432.5 623.0,434.3 621.4,435.5 619.0,435.5 617.4,434.3 617.4,432.5" fill="#ecee20"/>
<polygon points="638.1,385.1 640.0,385.1 640.0,388.8 638.1,388.8" fill="#ecee20"/>
<polygon points="638.1,401.8 640.0,401.8 640.0,404.6 638.1,404.6" fill="#ecee20"/>
<polygon points="518.7,436.0 520.6,436.0 521.9,437.1 521.9,438.7 520.6,439.7 518.7,439.7 517.4,438.7 517.4,437.1" fill="#c8cc40"/>
<polygon points="573.0,481.0 574.0,481.0 574.6,481.7 574.6,482.6 574.0,483.3 573.0,483.3 572.4,482.6 572.4,481.7" fill="#8f9fc0"/>
<polygon points="496.5,454.7 498.0,454.7 498.9,455.2 498.9,455.8 498.0,456.2 496.5,456.2 495.6,455.8 495.6,455.2" fill="#8f9fc0"/>
<ellipse cx="535.4" cy="526.9" rx="8.9" ry="8.9" fill="#ecee20"/>
<polygon points="440.0,553.8 451.1,551.0 467.8,549.5 486.3,548.2 501.1,546.4 517.8,544.5 528.9,540.8 532.6,534.3 540.0,534.3 546.5,533.4 554.8,534.7 565.9,536.2 580.7,535.4 595.6,534.3 606.7,531.6 617.8,529.1 628.9,526.9 640.0,524.7 640.0,575.1 632.6,574.1 627.0,578.8 617.8,582.5 606.7,583.4 597.4,580.6 588.1,582.5 580.7,580.6 578.0,588.0 573.3,593.6 567.8,598.2 560.4,595.4 555.7,588.0 553.9,580.6 549.3,575.1 543.7,571.4 540.0,574.1 536.3,572.3 532.6,575.1 528.9,573.2 523.3,575.1 517.8,574.1 514.1,571.4 508.5,574.1 503.9,575.1 499.3,574.1 495.6,567.7 491.9,558.4 486.3,556.6 479.8,563.0 477.0,569.9 469.6,564.0 462.2,559.3 451.1,560.6 443.7,565.4 440.0,571.7" fill="#ecee20"/>
<polygon points="614.1,540.8 625.2,537.1 640.0,534.0 640.0,538.0 632.6,540.8 623.3,542.7 615.9,544.5" fill="#122a5a"/>
<polygon points="564.4,554.7 567.8,549.5 574.3,547.3 578.9,550.6 578.0,556.6 572.4,560.3 566.9,559.3" fill="#122a5a"/>
<polygon points="584.4,562.1 591.9,558.4 599.3,556.6 604.8,560.3 603.0,565.8 597.4,564.9 591.9,567.7 586.3,567.7" fill="#122a5a"/>
<polygon points="597.4,544.5 603.0,541.7 606.7,544.5 603.0,548.2 598.3,548.2" fill="#122a5a"/>
<polygon points="580.7,573.2 586.3,571.4 593.7,573.2 597.4,577.9 591.9,580.6 584.4,579.7" fill="#122a5a"/>
<polygon points="617.8,551.9 627.0,550.1 634.4,552.9 632.6,558.4 625.2,560.3 618.7,557.5" fill="#122a5a"/>
<polygon points="606.7,568.6 614.1,565.8 617.8,569.5 614.1,574.1 607.6,574.1" fill="#122a5a"/>
<polygon points="627.0,564.0 634.4,563.0 636.3,567.7 630.7,570.4 626.7,568.0" fill="#122a5a"/>
<polygon points="558.5,562.1 565.9,564.9 567.8,568.6 563.1,569.9 558.5,566.7" fill="#122a5a"/>
<polygon points="551.1,556.6 556.7,554.7 558.5,562.1 553.9,564.9" fill="#122a5a"/>
<polygon points="508.5,562.1 511.3,554.7 514.1,554.7 513.1,563.0 510.4,567.7" fill="#122a5a"/>
<polygon points="519.6,564.0 522.4,556.6 527.0,554.7 528.9,558.4 525.2,565.8 521.5,568.6" fill="#122a5a"/>
<polygon points="536.3,562.1 539.1,556.6 541.9,560.3 540.0,568.6 537.2,567.7" fill="#122a5a"/>
<polygon points="503.0,556.6 505.7,552.9 507.0,556.6 504.8,560.3" fill="#122a5a"/>
<polygon points="570.6,551.9 575.2,551.4 575.6,555.6 571.1,556.2" fill="#ecee20"/>
<polygon points="472.4,609.3 475.2,604.7 479.8,597.3 485.4,589.9 495.6,588.0 496.5,578.8 499.3,575.1 504.8,576.0 504.8,582.5 502.0,589.9 499.3,597.3 504.8,601.9 510.4,599.1 514.1,595.4 521.5,596.4 532.6,594.5 540.0,592.7 543.7,586.2 546.5,582.5 550.2,584.3 550.2,591.7 545.6,597.3 536.3,600.1 525.2,601.0 515.9,601.9 511.3,604.7 503.0,606.6 495.6,608.4 488.1,610.3 482.6,612.1 476.1,612.1" fill="#ecee20"/>
<polygon points="532.6,574.1 537.2,574.1 536.7,588.0 533.5,588.0" fill="#ecee20"/>
<polygon points="486.3,597.3 493.7,593.6 497.4,597.3 493.7,601.9 487.2,601.9" fill="#122a5a"/>
<polygon points="444.4,590.3 447.0,590.3 448.7,591.3 448.7,592.9 447.0,594.0 444.4,594.0 442.8,592.9 442.8,591.3" fill="#ecee20"/>
<polygon points="446.7,576.6 448.5,576.6 449.6,577.6 449.6,579.4 448.5,580.4 446.7,580.4 445.6,579.4 445.6,577.6" fill="#ecee20"/>
<polygon points="622.0,597.9 624.2,597.9 625.6,599.2 625.6,601.3 624.2,602.7 622.0,602.7 620.6,601.3 620.6,599.2" fill="#ecee20"/>
<polygon points="631.9,603.8 633.7,603.8 634.8,604.7 634.8,606.0 633.7,606.9 631.9,606.9 630.7,606.0 630.7,604.7" fill="#ecee20"/>
<polygon points="619.1,586.6 621.1,586.6 622.4,587.5 622.4,589.0 621.1,589.9 619.1,589.9 617.8,589.0 617.8,587.5" fill="#ecee20"/>
<polygon points="623.4,578.8 625.1,578.8 626.1,579.8 626.1,581.4 625.1,582.5 623.4,582.5 622.4,581.4 622.4,579.8" fill="#ecee20"/>
<polygon points="637.2,579.7 640.0,578.8 640.0,589.9 637.2,589.5" fill="#ecee20"/>
<polygon points="580.7,608.4 586.3,606.6 589.1,610.3 586.3,614.0 581.7,613.6" fill="#ecee20"/>
<polygon points="522.9,611.9 525.2,611.9 526.7,613.2 526.7,615.3 525.2,616.6 522.9,616.6 521.5,615.3 521.5,613.2" fill="#ecee20"/>
<polygon points="555.9,611.4 557.6,611.4 558.7,612.5 558.7,614.2 557.6,615.3 555.9,615.3 554.8,614.2 554.8,612.5" fill="#ecee20"/>
<polygon points="584.6,510.3 586.2,510.3 587.2,511.3 587.2,512.9 586.2,514.0 584.6,514.0 583.5,512.9 583.5,511.3" fill="#aab070"/>
<polygon points="477.0,547.3 478.4,547.3 479.3,547.9 479.3,548.9 478.4,549.5 477.0,549.5 476.1,548.9 476.1,547.9" fill="#aab070"/>
<polygon points="440.0,520.0 550.4,520.0 550.4,590.6 440.0,590.6" fill="#122a5a"/>
<polygon points="440.0,552.7 446.1,551.2 455.3,551.7 465.6,550.7 475.8,550.2 486.0,549.1 497.3,547.1 509.5,545.6 521.8,544.5 530.0,543.0 536.1,540.4 542.2,537.9 550.4,536.9 550.4,577.3 542.2,575.2 538.2,577.3 532.0,575.7 526.9,576.7 521.8,575.2 515.7,576.2 511.6,577.3 506.5,575.7 501.3,574.2 501.3,569.1 499.3,565.0 495.2,561.9 492.1,558.9 493.2,555.3 488.1,554.3 482.9,555.8 478.9,560.9 475.8,565.0 473.7,568.1 467.6,570.1 464.5,569.1 466.6,565.0 465.6,560.9 462.5,558.9 456.4,559.4 452.3,560.4 454.3,562.9 451.2,565.0 445.1,566.5 444.1,570.1 440.0,571.1" fill="#ecee20"/>
<polygon points="464.0,568.1 467.6,567.5 468.1,570.1 464.5,570.6" fill="#ecee20"/>
<polygon points="473.7,570.1 478.9,568.1 479.9,570.1 475.3,573.7" fill="#ecee20"/>
<polygon points="446.3,577.1 448.3,577.1 449.5,578.1 449.5,579.6 448.3,580.6 446.3,580.6 445.1,579.6 445.1,578.1" fill="#ecee20"/>
<polygon points="494.2,575.7 497.3,575.2 501.3,573.2 505.4,578.3 506.5,581.3 505.4,585.4 505.4,590.6 494.2,590.6 493.7,583.4" fill="#ecee20"/>
<polygon points="512.1,576.7 513.0,576.7 513.6,578.0 513.6,580.1 513.0,581.3 512.1,581.3 511.6,580.1 511.6,578.0" fill="#ecee20"/>
<polygon points="518.1,576.2 518.8,576.2 519.2,577.4 519.2,579.2 518.8,580.3 518.1,580.3 517.7,579.2 517.7,577.4" fill="#ecee20"/>
<polygon points="523.3,576.0 523.9,576.0 524.4,577.1 524.4,578.8 523.9,579.8 523.3,579.8 522.8,578.8 522.8,577.1" fill="#ecee20"/>
<polygon points="528.4,576.2 529.0,576.2 529.5,577.2 529.5,578.8 529.0,579.8 528.4,579.8 527.9,578.8 527.9,577.2" fill="#ecee20"/>
<polygon points="532.5,575.7 536.1,575.7 536.6,590.6 533.6,590.6" fill="#ecee20"/>
<polygon points="543.3,569.1 550.4,568.1 550.4,585.4 546.3,584.4 543.3,581.3 542.2,575.2" fill="#ecee20"/>
<ellipse cx="536.1" cy="527.7" rx="9.2" ry="9.2" fill="#ecee20"/>
<polygon points="527.9,543.7 530.5,536.4 542.2,535.3 545.3,537.6 542.2,540.4" fill="#ecee20"/>
<polygon points="503.4,552.7 506.0,552.2 506.5,556.8 503.9,557.3" fill="#122a5a"/>
<polygon points="513.1,552.7 515.7,552.5 515.2,555.8 513.1,556.3" fill="#122a5a"/>
<polygon points="526.9,553.2 530.0,553.7 530.0,558.3 527.4,557.8" fill="#122a5a"/>
<polygon points="509.2,563.1 511.9,563.1 513.6,564.5 513.6,566.7 511.9,568.1 509.2,568.1 507.5,566.7 507.5,564.5" fill="#122a5a"/>
<polygon points="518.9,562.8 520.7,562.8 521.8,564.2 521.8,566.3 520.7,567.6 518.9,567.6 517.7,566.3 517.7,564.2" fill="#122a5a"/>
<polygon points="526.3,564.7 528.5,564.7 530.0,565.7 530.0,567.2 528.5,568.2 526.3,568.2 524.9,567.2 524.9,565.7" fill="#122a5a"/>
<polygon points="533.9,562.9 535.3,562.9 536.1,563.5 536.1,564.4 535.3,565.0 533.9,565.0 533.0,564.4 533.0,563.5" fill="#122a5a"/>
<polygon points="542.5,566.5 543.6,566.5 544.3,567.2 544.3,568.4 543.6,569.1 542.5,569.1 541.7,568.4 541.7,567.2" fill="#122a5a"/>
<polygon points="491.1,555.3 497.3,554.8 496.7,556.8 493.2,557.3" fill="#122a5a"/>
<polygon points="499.8,582.4 502.4,581.3 502.9,585.4 500.3,587.5" fill="#122a5a"/>
<polygon points="520.3,553.7 521.2,553.7 521.8,554.6 521.8,556.0 521.2,556.8 520.3,556.8 519.8,556.0 519.8,554.6" fill="#122a5a"/>
<polygon points="536.2,554.8 537.1,554.8 537.6,555.6 537.6,557.0 537.1,557.8 536.2,557.8 535.6,557.0 535.6,555.6" fill="#122a5a"/>
<polygon points="476.6,546.9 478.0,546.9 478.9,547.5 478.9,548.4 478.0,548.9 476.6,548.9 475.8,548.4 475.8,547.5" fill="#c8cc90"/>
<polygon points="550.0,520.0 660.4,520.0 660.4,590.6 550.0,590.6" fill="#122a5a"/>
<polygon points="550.0,533.3 556.1,534.3 565.3,535.3 575.6,535.8 585.8,535.3 596.0,534.3 606.2,532.3 616.5,530.2 626.7,527.7 636.9,525.1 647.1,522.6 660.4,520.0 660.4,590.3 550.0,590.3" fill="#ecee20"/>
<polygon points="563.8,553.7 566.4,549.7 570.4,547.1 575.6,546.6 579.7,549.7 580.7,553.7 577.6,557.8 574.5,560.9 569.4,560.9 565.3,559.4" fill="#122a5a"/>
<polygon points="583.7,562.9 588.9,559.9 592.9,556.8 599.1,555.3 605.2,555.8 607.3,558.9 611.3,553.7 615.4,551.7 621.6,550.2 627.7,550.7 631.8,553.7 636.9,555.8 637.9,560.9 634.9,565.0 640.0,567.0 646.1,565.0 652.2,569.1 648.2,573.2 645.1,577.3 650.2,579.3 656.3,577.3 660.4,578.3 660.4,591.8 601.1,591.8 603.2,585.4 607.3,581.3 603.2,577.3 598.1,579.3 592.9,577.3 590.9,573.2 587.8,569.1 584.8,567.0" fill="#122a5a"/>
<polygon points="613.4,539.4 617.5,537.9 623.6,536.9 629.8,535.3 633.8,532.8 639.0,532.8 641.0,536.4 640.0,538.4 635.9,537.4 631.8,538.4 627.7,539.4 624.6,542.0 623.6,544.5 617.5,545.1 613.9,544.0" fill="#122a5a"/>
<polygon points="641.0,540.4 644.1,539.9 646.1,544.5 649.2,549.7 652.2,551.7 650.2,554.8 646.1,554.3 642.0,549.7 640.5,544.5" fill="#122a5a"/>
<polygon points="595.0,541.5 599.1,541.0 601.1,543.5 600.1,546.6 603.2,548.6 601.1,550.2 598.1,547.6 595.5,544.5" fill="#122a5a"/>
<polygon points="586.8,551.2 592.9,550.7 598.1,550.2 598.6,552.2 592.9,553.2 587.3,553.2" fill="#122a5a"/>
<polygon points="579.7,577.3 583.7,575.2 587.8,577.3 588.9,582.4 584.8,584.9 580.7,583.4" fill="#122a5a"/>
<polygon points="550.0,555.8 552.0,556.8 554.1,562.9 556.1,567.0 554.6,568.1 552.0,564.0 550.0,560.9" fill="#122a5a"/>
<polygon points="560.2,561.9 562.3,561.4 566.4,566.0 569.4,570.1 567.4,570.6 563.3,567.0" fill="#122a5a"/>
<polygon points="550.0,573.2 554.1,571.1 557.2,572.1 556.1,575.7 553.1,577.3 552.0,581.3 553.1,590.6 550.0,590.6" fill="#122a5a"/>
<polygon points="574.5,586.5 580.7,585.4 592.9,586.5 595.0,591.8 574.5,591.8" fill="#122a5a"/>
<polygon points="577.6,570.1 581.7,569.1 583.7,572.1 579.7,573.2" fill="#122a5a"/>
<polygon points="569.4,550.7 574.5,550.2 576.6,553.7 572.5,555.8 569.4,554.8" fill="#ecee20"/>
<polygon points="595.0,569.1 601.1,567.0 607.3,566.0 611.3,568.1 610.3,573.2 605.2,575.2 599.1,575.2 595.0,573.2" fill="#ecee20"/>
<polygon points="618.1,560.6 620.7,560.6 622.4,561.8 622.4,563.6 620.7,564.8 618.1,564.8 616.5,563.6 616.5,561.8" fill="#ecee20"/>
<polygon points="627.3,567.8 629.9,567.8 631.6,569.4 631.6,571.9 629.9,573.5 627.3,573.5 625.7,571.9 625.7,569.4" fill="#ecee20"/>
<polygon points="632.3,555.5 634.8,555.5 636.3,556.7 636.3,558.5 634.8,559.7 632.3,559.7 630.8,558.5 630.8,556.7" fill="#ecee20"/>
<polygon points="622.8,579.0 624.8,579.0 626.1,580.3 626.1,582.4 624.8,583.7 622.8,583.7 621.6,582.4 621.6,580.3" fill="#ecee20"/>
<polygon points="607.3,577.3 615.4,575.2 619.5,577.3 615.4,581.3 609.3,582.4" fill="#ecee20"/>
<polygon points="637.9,579.3 642.0,579.3 642.0,590.3 637.9,590.3" fill="#ecee20"/>
<polygon points="646.1,575.2 652.2,574.2 654.3,578.3 648.2,579.8" fill="#ecee20"/>
<polygon points="550.2,626.1 556.7,626.1 558.5,633.5 558.5,641.9 562.2,642.8 562.2,645.6 553.0,646.5 550.2,643.7 550.7,634.4" fill="#ecee20"/>
<polygon points="578.9,637.2 586.3,635.9 593.7,636.7 597.4,640.0 596.5,644.6 588.1,646.5 583.5,649.6 579.8,647.4 578.9,641.9" fill="#ecee20"/>
<polygon points="575.3,636.3 576.9,636.3 578.0,637.6 578.0,639.6 576.9,640.9 575.3,640.9 574.3,639.6 574.3,637.6" fill="#ecee20"/>
<polygon points="532.6,629.8 537.2,628.9 539.1,633.5 535.4,635.9 532.6,634.1" fill="#ecee20"/>
<polygon points="440.0,642.8 443.7,640.9 449.3,641.9 452.0,646.5 456.7,648.3 456.7,652.0 440.0,652.0" fill="#ecee20"/>
<polygon points="471.6,647.4 473.2,647.4 474.3,648.4 474.3,650.1 473.2,651.1 471.6,651.1 470.6,650.1 470.6,648.4" fill="#ecee20"/>
<polygon points="520.0,645.6 522.0,645.6 523.3,647.1 523.3,649.6 522.0,651.1 520.0,651.1 518.7,649.6 518.7,647.1" fill="#ecee20"/>
<polygon points="537.1,642.8 538.3,642.8 539.1,643.6 539.1,644.8 538.3,645.6 537.1,645.6 536.3,644.8 536.3,643.6" fill="#ecee20"/>
<polygon points="510.5,650.2 512.1,650.2 513.1,650.7 513.1,651.5 512.1,652.0 510.5,652.0 509.4,651.5 509.4,650.7" fill="#ecee20"/>
<polygon points="636.3,650.2 640.0,649.3 640.0,652.0 636.3,652.0" fill="#ecee20"/>
<polygon points="471.0,624.3 473.2,624.3 474.6,625.4 474.6,627.2 473.2,628.3 471.0,628.3 469.6,627.2 469.6,625.4" fill="#ecee20"/>
<polygon points="509.4,617.8 514.1,616.3 516.9,619.6 515.9,626.1 513.1,627.0 511.3,622.4" fill="#ecee20"/>
<polygon points="525.7,622.0 527.9,622.0 529.3,623.8 529.3,626.6 527.9,628.3 525.7,628.3 524.3,626.6 524.3,623.8" fill="#ecee20"/>
<polygon points="573.3,615.9 578.0,614.1 582.6,616.9 586.3,620.6 586.3,625.2 580.7,624.3 577.0,620.6 573.7,619.6" fill="#ecee20"/>
<polygon points="590.0,615.0 595.6,613.7 601.1,615.6 604.8,620.6 606.7,628.9 602.0,629.8 598.3,624.3 592.8,621.5" fill="#ecee20"/>
<polygon points="571.3,623.3 572.6,623.3 573.3,624.1 573.3,625.3 572.6,626.1 571.3,626.1 570.6,625.3 570.6,624.1" fill="#ecee20"/>
<polygon points="672.4,180.2 676.1,178.9 682.6,180.7 685.4,183.3 681.7,184.8 675.2,183.9" fill="#ecee20"/>
<polygon points="686.3,172.8 690.0,172.8 693.7,174.6 693.3,176.1 689.1,175.2" fill="#a8ac70"/>
<polygon points="760.7,127.0 761.9,127.0 762.6,127.6 762.6,128.4 761.9,128.9 760.7,128.9 760.0,128.4 760.0,127.6" fill="#d8dce8"/>
<polygon points="700.2,201.5 701.7,201.5 702.6,202.0 702.6,202.8 701.7,203.3 700.2,203.3 699.3,202.8 699.3,202.0" fill="#a8b0b0"/>
<polygon points="658.9,220.9 660.0,220.9 660.7,221.6 660.7,222.7 660.0,223.3 658.9,223.3 658.1,222.7 658.1,221.6" fill="#a8b0b0"/>
<polygon points="720.8,213.5 722.1,213.5 723.0,213.9 723.0,214.5 722.1,214.8 720.8,214.8 720.0,214.5 720.0,213.9" fill="#5a6c96"/>
<polygon points="749.1,224.1 750.3,224.1 751.1,224.5 751.1,225.1 750.3,225.6 749.1,225.6 748.3,225.1 748.3,224.5" fill="#5a6c96"/>
<polygon points="654.5,275.1 656.4,275.1 657.6,276.1 657.6,277.5 656.4,278.5 654.5,278.5 653.3,277.5 653.3,276.1" fill="#b0b470"/>
<polygon points="692.2,297.9 693.3,297.9 694.1,298.6 694.1,299.7 693.3,300.3 692.2,300.3 691.5,299.7 691.5,298.6" fill="#a8b0a0"/>
<polygon points="703.3,299.8 704.5,299.8 705.2,300.5 705.2,301.5 704.5,302.2 703.3,302.2 702.6,301.5 702.6,300.5" fill="#a8b0a0"/>
<polygon points="714.9,332.2 716.9,332.2 718.1,333.1 718.1,334.6 716.9,335.5 714.9,335.5 713.7,334.6 713.7,333.1" fill="#d0d050"/>
<polygon points="647.0,348.5 651.1,347.4 654.4,349.8 653.3,354.0 648.9,354.0 646.7,351.6" fill="#ecee20"/>
<polygon points="699.6,352.9 703.9,352.6 705.7,355.3 703.9,358.1 700.2,357.7" fill="#ecee20"/>
<polygon points="650.2,366.4 654.8,362.2 659.4,362.7 660.0,367.0 656.7,370.7 651.5,370.7" fill="#ecee20"/>
<polygon points="731.7,365.5 735.4,363.3 740.0,363.7 743.7,368.3 744.6,374.8 736.3,374.8 732.6,370.1" fill="#ecee20"/>
<polygon points="704.8,369.2 709.4,368.9 711.3,374.8 705.7,374.8" fill="#ecee20"/>
<polygon points="674.8,370.7 677.0,370.7 677.4,374.8 674.8,374.8" fill="#ecee20"/>
<polygon points="652.0,340.5 652.8,340.5 653.3,340.9 653.3,341.6 652.8,342.0 652.0,342.0 651.5,341.6 651.5,340.9" fill="#8090b0"/>
<polygon points="653.5,303.5 654.3,303.5 654.8,303.9 654.8,304.5 654.3,305.0 653.5,305.0 653.0,304.5 653.0,303.9" fill="#8090b0"/>
<polygon points="780.6,327.0 781.8,327.0 782.6,327.4 782.6,328.1 781.8,328.5 780.6,328.5 779.8,328.1 779.8,327.4" fill="#8090b0"/>
<polygon points="757.1,369.6 758.4,369.6 759.3,370.3 759.3,371.5 758.4,372.2 757.1,372.2 756.3,371.5 756.3,370.3" fill="#8090b0"/>
<polygon points="647.3,378.3 650.1,378.3 651.9,379.6 651.9,381.6 650.1,382.9 647.3,382.9 645.6,381.6 645.6,379.6" fill="#ecee20"/>
<polygon points="640.0,385.5 643.7,385.5 644.1,389.2 640.0,389.7" fill="#ecee20"/>
<polygon points="647.4,395.3 652.0,394.0 653.3,397.1 650.2,399.9 647.4,399.0" fill="#ecee20"/>
<polygon points="640.0,401.8 643.3,401.8 643.7,406.4 640.0,407.0" fill="#ecee20"/>
<polygon points="681.2,392.1 683.4,392.1 684.8,393.7 684.8,396.0 683.4,397.5 681.2,397.5 679.8,396.0 679.8,393.7" fill="#ecee20"/>
<polygon points="674.3,374.0 678.9,374.0 678.5,375.5 674.8,375.5" fill="#ecee20"/>
<polygon points="706.3,374.0 711.3,374.0 710.7,375.9 706.7,375.9" fill="#ecee20"/>
<polygon points="737.2,374.0 744.6,374.0 744.6,378.1 740.9,379.2 737.8,376.8" fill="#ecee20"/>
<polygon points="724.3,381.8 726.4,381.8 727.8,383.0 727.8,384.8 726.4,386.0 724.3,386.0 723.0,384.8 723.0,383.0" fill="#ecee20"/>
<polygon points="733.4,381.4 735.2,381.4 736.3,382.4 736.3,384.1 735.2,385.1 733.4,385.1 732.2,384.1 732.2,382.4" fill="#ecee20"/>
<polygon points="746.2,381.4 747.7,381.4 748.7,382.5 748.7,384.3 747.7,385.5 746.2,385.5 745.2,384.3 745.2,382.5" fill="#ecee20"/>
<polygon points="757.6,389.7 760.5,389.7 762.4,391.2 762.4,393.6 760.5,395.1 757.6,395.1 755.7,393.6 755.7,391.2" fill="#ecee20"/>
<polygon points="727.6,409.6 730.0,409.6 731.5,411.3 731.5,414.0 730.0,415.7 727.6,415.7 726.1,414.0 726.1,411.3" fill="#ecee20"/>
<polygon points="766.9,442.9 769.0,442.9 770.4,444.8 770.4,447.8 769.0,449.7 766.9,449.7 765.6,447.8 765.6,444.8" fill="#ecee20"/>
<polygon points="654.8,495.3 662.6,494.7 663.1,501.8 655.7,501.8" fill="#ecee20"/>
<polygon points="659.7,381.0 661.5,381.0 662.6,381.8 662.6,382.9 661.5,383.6 659.7,383.6 658.5,382.9 658.5,381.8" fill="#c0c450"/>
<polygon points="692.8,495.3 694.3,495.3 695.2,496.0 695.2,497.0 694.3,497.7 692.8,497.7 691.9,497.0 691.9,496.0" fill="#c0c450"/>
<polygon points="717.4,382.3 718.2,382.3 718.7,382.9 718.7,383.7 718.2,384.2 717.4,384.2 716.9,383.7 716.9,382.9" fill="#c0c450"/>
<polygon points="812.1,386.6 813.3,386.6 814.1,387.2 814.1,388.2 813.3,388.8 812.1,388.8 811.3,388.2 811.3,387.2" fill="#8090b0"/>
<polygon points="782.3,479.9 783.4,479.9 784.1,480.5 784.1,481.5 783.4,482.1 782.3,482.1 781.7,481.5 781.7,480.5" fill="#8090b0"/>
<polygon points="714.4,493.4 715.6,493.4 716.3,493.9 716.3,494.5 715.6,494.9 714.4,494.9 713.7,494.5 713.7,493.9" fill="#8090b0"/>
<polygon points="640.0,525.1 651.1,520.4 665.9,516.7 680.7,513.6 695.6,511.2 707.6,508.8 715.0,511.2 716.9,514.9 713.1,517.7 704.8,519.5 697.4,522.3 691.9,526.0 686.3,528.8 679.8,530.6 679.8,535.3 677.0,538.0 684.4,539.9 690.9,540.8 694.6,544.5 693.7,550.1 689.1,553.8 686.3,558.4 682.6,564.0 679.8,568.6 686.3,568.6 689.1,572.3 685.4,575.1 684.4,582.5 677.0,584.3 670.6,587.1 665.9,585.3 666.9,576.9 662.2,575.1 654.8,577.9 647.4,579.7 644.6,575.1 651.1,569.5 645.6,565.8 640.0,566.7" fill="#ecee20"/>
<polygon points="662.2,538.0 667.8,539.0 677.0,537.1 679.3,532.5 678.0,526.9 674.3,525.1 673.0,526.9 676.1,530.6 675.2,535.3 667.8,536.6 663.1,536.2" fill="#122a5a"/>
<polygon points="640.0,538.0 643.7,540.8 648.3,549.1 649.3,554.7 645.6,553.8 641.9,547.3 640.0,545.4" fill="#122a5a"/>
<polygon points="677.1,546.9 678.8,546.9 679.8,547.7 679.8,548.8 678.8,549.5 677.1,549.5 676.1,548.8 676.1,547.7" fill="#122a5a"/>
<polygon points="673.4,557.5 675.1,557.5 676.1,558.3 676.1,559.5 675.1,560.3 673.4,560.3 672.4,559.5 672.4,558.3" fill="#122a5a"/>
<polygon points="678.3,571.4 680.4,571.4 681.7,572.4 681.7,574.0 680.4,575.1 678.3,575.1 677.0,574.0 677.0,572.4" fill="#122a5a"/>
<polygon points="697.4,525.1 701.1,522.9 704.8,524.1 705.7,528.8 703.9,532.1 699.3,532.1 697.4,528.8" fill="#ecee20"/>
<polygon points="722.2,508.6 724.8,508.6 726.5,510.1 726.5,512.6 724.8,514.1 722.2,514.1 720.6,512.6 720.6,510.1" fill="#ecee20"/>
<polygon points="722.2,541.6 724.8,541.6 726.5,543.2 726.5,545.8 724.8,547.5 722.2,547.5 720.6,545.8 720.6,543.2" fill="#ecee20"/>
<polygon points="750.7,564.9 754.4,564.0 755.7,567.3 753.3,569.9 750.7,568.6" fill="#ecee20"/>
<polygon points="659.4,595.4 663.1,592.7 667.8,593.6 668.7,597.3 665.9,601.9 663.1,606.6 658.9,606.9 658.5,601.9" fill="#ecee20"/>
<polygon points="665.0,614.9 669.6,610.3 677.0,607.5 686.3,603.8 692.8,600.1 694.6,593.6 693.7,587.1 696.5,584.3 699.3,588.0 701.1,595.4 703.9,601.9 703.9,607.5 697.4,610.3 690.0,613.0 684.4,617.7 677.0,622.3 669.6,621.4 665.6,618.6" fill="#ecee20"/>
<polygon points="713.1,606.6 717.8,603.8 721.5,600.1 728.9,597.3 734.4,596.9 739.1,599.1 740.0,604.7 739.1,609.3 740.9,612.1 739.1,616.7 732.6,617.7 727.0,615.8 723.3,619.5 718.7,619.5 716.9,614.9 718.7,610.3 714.1,609.3" fill="#ecee20"/>
<polygon points="741.9,598.2 746.5,597.3 747.4,601.9 743.7,603.8 741.5,601.9" fill="#ecee20"/>
<polygon points="640.0,579.7 642.2,579.7 642.8,589.9 640.0,591.7" fill="#ecee20"/>
<polygon points="654.0,589.5 655.6,589.5 656.7,590.4 656.7,591.8 655.6,592.7 654.0,592.7 653.0,591.8 653.0,590.4" fill="#ecee20"/>
<polygon points="656.7,501.0 660.4,501.0 660.0,502.5 657.0,502.5" fill="#ecee20"/>
<polygon points="702.8,542.1 704.0,542.1 704.8,542.9 704.8,544.2 704.0,545.1 702.8,545.1 702.0,544.2 702.0,542.9" fill="#a0a860"/>
<polygon points="667.9,623.2 669.5,623.2 670.6,623.8 670.6,624.8 669.5,625.4 667.9,625.4 666.9,624.8 666.9,623.8" fill="#a0a860"/>
<polygon points="649.3,650.2 654.8,649.6 655.7,652.0 649.3,652.0" fill="#ecee20"/>
<polygon points="640.0,650.2 641.9,650.2 641.9,652.0 640.0,652.0" fill="#ecee20"/>
<ellipse cx="535.4" cy="527" rx="188" ry="179" fill="none" stroke="#47308a" stroke-width="1.1" stroke-dasharray="7 2.5" opacity=".72"/>
<line x1="513.7" y1="120" x2="535.4" y2="527" stroke="#5a2f9a" stroke-width="1.6" stroke-dasharray="6 2" opacity=".9"/>
<line x1="534.5" y1="120" x2="534.5" y2="519" stroke="#5f719d" stroke-width="1"/>
<path d="M527 357 H541 M534 349 V365" stroke="#8a35b5" stroke-width="1.6"/><rect x="532" y="353.5" width="4" height="7" fill="#9a3fc0"/>
</g>
<text x="535.4" y="109.8" font-size="6.5" font-weight="bold" fill="#3a4a78" text-anchor="middle" font-family="Liberation Sans, sans-serif">000</text>
<text x="789.4" y="109.8" font-size="6.5" font-weight="bold" fill="#3a4a78" text-anchor="middle" font-family="Liberation Sans, sans-serif">030</text>
<text x="844.0" y="365.3" font-size="6.5" font-weight="bold" fill="#3a4a78" text-anchor="middle" font-family="Liberation Sans, sans-serif">060</text>
<text x="844.0" y="533.3" font-size="6.5" font-weight="bold" fill="#3a4a78" text-anchor="middle" font-family="Liberation Sans, sans-serif">090</text>
<text x="229.0" y="533.3" font-size="6.5" font-weight="bold" fill="#3a4a78" text-anchor="middle" font-family="Liberation Sans, sans-serif">270</text>
<text x="229.0" y="365.3" font-size="6.5" font-weight="bold" fill="#3a4a78" text-anchor="middle" font-family="Liberation Sans, sans-serif">300</text>
<text x="281.4" y="109.8" font-size="6.5" font-weight="bold" fill="#3a4a78" text-anchor="middle" font-family="Liberation Sans, sans-serif">330</text>
<path d="M535.4 119.2l0.0 -7.0M542.9 119.2l0.1 -4.5M550.4 119.2l0.2 -4.5M557.8 119.2l0.2 -4.5M565.3 119.2l0.3 -4.5M572.9 119.2l0.5 -6.0M580.4 119.2l0.5 -4.5M588.0 119.2l0.6 -4.5M595.6 119.2l0.7 -4.5M603.2 119.2l0.7 -4.4M610.9 119.2l1.3 -6.9M618.6 119.2l0.9 -4.4M626.4 119.2l1.0 -4.4M634.2 119.2l1.1 -4.4M642.2 119.2l1.1 -4.4M650.1 119.2l1.6 -5.8M658.2 119.2l1.3 -4.3M666.3 119.2l1.4 -4.3M674.5 119.2l1.5 -4.3M682.8 119.2l1.5 -4.2M691.2 119.3l2.5 -6.5M699.7 119.3l1.7 -4.2M708.4 119.3l1.8 -4.1M717.1 119.3l1.8 -4.1M726.0 119.3l1.9 -4.1M735.0 119.3l2.6 -5.4M744.2 119.3l2.1 -4.0M753.5 119.3l2.1 -4.0M763.0 119.3l2.2 -3.9M772.7 119.3l2.3 -3.9M782.5 119.3l3.6 -6.0M792.6 119.3l2.4 -3.8M802.9 119.3l2.5 -3.8M813.4 119.3l2.5 -3.7M824.1 119.3l2.6 -3.7M831.5 124.3l3.6 -4.8M831.5 138.9l2.7 -3.6M831.5 152.8l2.8 -3.5M831.5 166.0l2.9 -3.5M831.5 178.7l2.9 -3.4M831.5 190.9l4.6 -5.3M831.5 202.6l3.0 -3.3M831.5 213.8l3.1 -3.3M831.6 224.5l3.1 -3.2M831.6 234.9l3.2 -3.2M831.6 244.9l4.3 -4.1M831.6 254.6l3.3 -3.0M831.6 263.9l3.4 -3.0M831.6 273.0l3.4 -2.9M831.6 281.8l3.5 -2.9M831.6 290.3l5.5 -4.4M831.6 298.5l3.6 -2.7M831.6 306.6l3.6 -2.7M831.6 314.4l3.7 -2.6M831.7 322.0l3.7 -2.6M831.7 329.4l5.0 -3.3M831.7 336.7l3.8 -2.4M831.7 343.8l3.8 -2.4M831.7 350.7l3.9 -2.3M831.7 357.4l3.9 -2.2M831.7 364.1l6.1 -3.4M831.7 370.6l4.0 -2.1M831.7 376.9l4.0 -2.0M831.7 383.2l4.0 -2.0M831.7 389.4l4.1 -1.9M831.7 395.4l5.5 -2.4M831.7 401.3l4.1 -1.8M831.7 407.2l4.2 -1.7M831.7 413.0l4.2 -1.6M831.8 418.7l4.2 -1.5M831.8 424.3l6.6 -2.3M831.8 429.8l4.3 -1.4M831.8 435.3l4.3 -1.3M831.8 440.7l4.3 -1.3M831.8 446.1l4.3 -1.2M831.8 451.4l5.8 -1.5M831.8 456.6l4.4 -1.0M831.8 461.8l4.4 -1.0M831.8 467.0l4.4 -0.9M831.8 472.1l4.4 -0.8M831.8 477.2l6.9 -1.2M831.8 482.3l4.4 -0.7M831.8 487.3l4.5 -0.6M831.8 492.3l4.5 -0.5M831.8 497.3l4.5 -0.4M831.8 502.3l6.0 -0.5M831.8 507.3l4.5 -0.3M831.8 512.2l4.5 -0.2M831.8 517.1l4.5 -0.1M831.8 522.1l4.5 -0.1M831.8 527.0l7.0 -0.0M831.8 531.9l4.5 0.1M831.8 536.9l4.5 0.1M831.8 541.8l4.5 0.2M831.8 546.7l4.5 0.3M831.8 551.7l6.0 0.5M831.8 556.7l4.5 0.4M831.8 561.7l4.5 0.5M831.8 566.7l4.5 0.6M831.8 571.7l4.4 0.7M831.8 576.8l6.9 1.2M831.8 581.9l4.4 0.8M831.8 587.0l4.4 0.9M831.8 592.2l4.4 1.0M831.8 597.4l4.4 1.0M831.8 602.6l5.8 1.5M831.8 607.9l4.3 1.2M831.8 613.3l4.3 1.3M831.8 618.7l4.3 1.3M831.8 624.2l4.3 1.4M831.8 629.7l6.6 2.3M831.8 635.3l4.2 1.5M831.7 641.0l4.2 1.6M831.7 646.8l4.2 1.7M830.9 652.3l4.1 1.8M817.6 652.3l5.5 2.4M805.2 652.3l4.1 1.9M793.7 652.3l4.0 2.0M783.0 652.4l4.0 2.0M772.9 652.4l4.0 2.1M763.4 652.4l6.1 3.4M754.5 652.4l3.9 2.2M746.1 652.4l3.9 2.3M738.2 652.4l3.8 2.4M730.7 652.4l3.8 2.4M723.5 652.4l5.0 3.3M716.7 652.5l3.7 2.6M710.2 652.5l3.7 2.6M704.0 652.5l3.6 2.7M698.1 652.5l3.6 2.7M692.4 652.5l5.5 4.4M687.0 652.5l3.5 2.9M681.8 652.5l3.4 2.9M676.7 652.5l3.4 3.0M671.9 652.5l3.3 3.0M667.2 652.6l4.3 4.1M662.7 652.6l3.2 3.2M658.4 652.6l3.1 3.2M654.1 652.6l3.1 3.3M650.0 652.6l3.0 3.3M646.1 652.6l4.6 5.3M642.2 652.6l2.9 3.4M638.5 652.6l2.9 3.5M634.8 652.6l2.8 3.5M631.2 652.6l2.7 3.6M627.8 652.6l3.6 4.8M624.4 652.7l2.6 3.7M621.1 652.7l2.5 3.7M617.9 652.7l2.5 3.8M614.7 652.7l2.4 3.8M611.6 652.7l3.6 6.0M608.6 652.7l2.3 3.9M605.6 652.7l2.2 3.9M602.7 652.7l2.1 4.0M599.8 652.7l2.1 4.0M597.0 652.7l2.6 5.4M594.2 652.7l1.9 4.1M591.4 652.7l1.8 4.1M588.7 652.7l1.8 4.1M586.1 652.7l1.7 4.2M583.5 652.7l2.5 6.5M580.9 652.8l1.5 4.2M578.3 652.8l1.5 4.3M575.8 652.8l1.4 4.3M573.3 652.8l1.3 4.3M570.8 652.8l1.6 5.8M568.3 652.8l1.1 4.4M565.9 652.8l1.1 4.4M563.5 652.8l1.0 4.4M561.1 652.8l0.9 4.4M558.7 652.8l1.3 6.9M556.3 652.8l0.7 4.4M554.0 652.8l0.7 4.5M551.6 652.8l0.6 4.5M549.3 652.8l0.5 4.5M547.0 652.8l0.5 6.0M544.6 652.8l0.3 4.5M542.3 652.8l0.2 4.5M540.0 652.8l0.2 4.5M537.7 652.8l0.1 4.5M535.4 652.8l0.0 7.0M533.1 652.8l-0.1 4.5M530.8 652.8l-0.2 4.5M528.5 652.8l-0.2 4.5M526.2 652.8l-0.3 4.5M523.8 652.8l-0.5 6.0M521.5 652.8l-0.5 4.5M519.2 652.8l-0.6 4.5M516.8 652.8l-0.7 4.5M514.5 652.8l-0.7 4.4M512.1 652.8l-1.3 6.9M509.7 652.8l-0.9 4.4M507.3 652.8l-1.0 4.4M504.9 652.8l-1.1 4.4M502.5 652.8l-1.1 4.4M500.0 652.8l-1.6 5.8M497.5 652.8l-1.3 4.3M495.0 652.8l-1.4 4.3M492.5 652.8l-1.5 4.3M489.9 652.8l-1.5 4.2M487.3 652.7l-2.5 6.5M484.7 652.7l-1.7 4.2M482.1 652.7l-1.8 4.1M479.4 652.7l-1.8 4.1M476.6 652.7l-1.9 4.1M473.8 652.7l-2.6 5.4M471.0 652.7l-2.1 4.0M468.1 652.7l-2.1 4.0M465.2 652.7l-2.2 3.9M462.2 652.7l-2.3 3.9M459.2 652.7l-3.6 6.0M456.1 652.7l-2.4 3.8M452.9 652.7l-2.5 3.8M449.7 652.7l-2.5 3.7M446.4 652.7l-2.6 3.7M443.0 652.6l-3.6 4.8M439.6 652.6l-2.7 3.6M436.0 652.6l-2.8 3.5M432.3 652.6l-2.9 3.5M428.6 652.6l-2.9 3.4M424.7 652.6l-4.6 5.3M420.8 652.6l-3.0 3.3M416.7 652.6l-3.1 3.3M412.4 652.6l-3.1 3.2M408.1 652.6l-3.2 3.2M403.6 652.6l-4.3 4.1M398.9 652.5l-3.3 3.0M394.1 652.5l-3.4 3.0M389.0 652.5l-3.4 2.9M383.8 652.5l-3.5 2.9M378.4 652.5l-5.5 4.4M372.7 652.5l-3.6 2.7M366.8 652.5l-3.6 2.7M360.6 652.5l-3.7 2.6M354.1 652.5l-3.7 2.6M347.3 652.4l-5.0 3.3M340.1 652.4l-3.8 2.4M332.6 652.4l-3.8 2.4M324.7 652.4l-3.9 2.3M316.3 652.4l-3.9 2.2M307.4 652.4l-6.1 3.4M297.9 652.4l-4.0 2.1M287.8 652.4l-4.0 2.0M277.1 652.3l-4.0 2.0M265.6 652.3l-4.1 1.9M253.2 652.3l-5.5 2.4M239.9 652.3l-4.1 1.8M239.3 646.7l-4.2 1.7M239.3 641.0l-4.2 1.6M239.2 635.3l-4.2 1.5M239.2 629.7l-6.6 2.3M239.2 624.1l-4.3 1.4M239.2 618.6l-4.3 1.3M239.2 613.2l-4.3 1.3M239.2 607.9l-4.3 1.2M239.2 602.6l-5.8 1.5M239.2 597.3l-4.4 1.0M239.2 592.1l-4.4 1.0M239.2 587.0l-4.4 0.9M239.2 581.8l-4.4 0.8M239.2 576.7l-6.9 1.2M239.2 571.7l-4.4 0.7M239.2 566.6l-4.5 0.6M239.2 561.6l-4.5 0.5M239.2 556.6l-4.5 0.4M239.2 551.7l-6.0 0.5M239.2 546.7l-4.5 0.3M239.2 541.8l-4.5 0.2M239.2 536.9l-4.5 0.1M239.2 531.9l-4.5 0.1M239.2 527.0l-7.0 0.0M239.2 522.1l-4.5 -0.1M239.2 517.1l-4.5 -0.1M239.2 512.2l-4.5 -0.2M239.2 507.3l-4.5 -0.3M239.2 502.3l-6.0 -0.5M239.2 497.4l-4.5 -0.4M239.2 492.4l-4.5 -0.5M239.2 487.4l-4.5 -0.6M239.2 482.3l-4.4 -0.7M239.2 477.3l-6.9 -1.2M239.2 472.2l-4.4 -0.8M239.2 467.0l-4.4 -0.9M239.2 461.9l-4.4 -1.0M239.2 456.7l-4.4 -1.0M239.2 451.4l-5.8 -1.5M239.2 446.1l-4.3 -1.2M239.2 440.8l-4.3 -1.3M239.2 435.4l-4.3 -1.3M239.2 429.9l-4.3 -1.4M239.2 424.3l-6.6 -2.3M239.2 418.7l-4.2 -1.5M239.3 413.0l-4.2 -1.6M239.3 407.3l-4.2 -1.7M239.3 401.4l-4.1 -1.8M239.3 395.5l-5.5 -2.4M239.3 389.4l-4.1 -1.9M239.3 383.3l-4.0 -2.0M239.3 377.1l-4.0 -2.0M239.3 370.7l-4.0 -2.1M239.3 364.2l-6.1 -3.4M239.3 357.6l-3.9 -2.2M239.3 350.8l-3.9 -2.3M239.3 343.9l-3.8 -2.4M239.3 336.8l-3.8 -2.4M239.3 329.6l-5.0 -3.3M239.3 322.1l-3.7 -2.6M239.4 314.5l-3.7 -2.6M239.4 306.7l-3.6 -2.7M239.4 298.7l-3.6 -2.7M239.4 290.4l-5.5 -4.4M239.4 281.9l-3.5 -2.9M239.4 273.2l-3.4 -2.9M239.4 264.1l-3.4 -3.0M239.4 254.8l-3.3 -3.0M239.4 245.1l-4.3 -4.1M239.4 235.1l-3.2 -3.2M239.4 224.7l-3.1 -3.2M239.5 214.0l-3.1 -3.3M239.5 202.8l-3.0 -3.3M239.5 191.1l-4.6 -5.3M239.5 179.0l-2.9 -3.4M239.5 166.3l-2.9 -3.5M239.5 153.0l-2.8 -3.5M239.5 139.1l-2.7 -3.6M239.5 124.6l-3.6 -4.8M246.7 119.3l-2.6 -3.7M257.4 119.3l-2.5 -3.7M267.9 119.3l-2.5 -3.8M278.2 119.3l-2.4 -3.8M288.3 119.3l-3.6 -6.0M298.1 119.3l-2.3 -3.9M307.8 119.3l-2.2 -3.9M317.3 119.3l-2.1 -4.0M326.6 119.3l-2.1 -4.0M335.8 119.3l-2.6 -5.4M344.8 119.3l-1.9 -4.1M353.7 119.3l-1.8 -4.1M362.4 119.3l-1.8 -4.1M371.1 119.3l-1.7 -4.2M379.6 119.3l-2.5 -6.5M388.0 119.2l-1.5 -4.2M396.3 119.2l-1.5 -4.3M404.5 119.2l-1.4 -4.3M412.6 119.2l-1.3 -4.3M420.7 119.2l-1.6 -5.8M428.6 119.2l-1.1 -4.4M436.6 119.2l-1.1 -4.4M444.4 119.2l-1.0 -4.4M452.2 119.2l-0.9 -4.4M459.9 119.2l-1.3 -6.9M467.6 119.2l-0.7 -4.4M475.2 119.2l-0.7 -4.5M482.8 119.2l-0.6 -4.5M490.4 119.2l-0.5 -4.5M497.9 119.2l-0.5 -6.0M505.5 119.2l-0.3 -4.5M513.0 119.2l-0.2 -4.5M520.4 119.2l-0.2 -4.5M527.9 119.2l-0.1 -4.5" stroke="#8791a6" stroke-width="0.9" fill="none"/>
<path d="M533.6 114 h3.6 l-1.8 3z" fill="#8a35b5"/>
<rect x="237.8" y="120" width="2.2" height="532" fill="#cbccee"/><rect x="831" y="120" width="1.4" height="533" fill="#8495ad"/>
</svg>
<span class="t" style="left:64.0px;top:106.3px;font-size:11.5px;color:#c4202e;font-weight:bold;transform:scaleX(1.174);-webkit-text-stroke:0.7px #c4202e;">Raytheon</span>
<span class="t" style="left:131.0px;top:108.2px;font-size:8.5px;color:#15151c;font-weight:bold;transform:scaleX(1.137);">Anschütz</span>
<div style="position:absolute;left:64.0px;top:122.0px;width:112.5px;height:4.3px;background:#c9151b"></div>
<div style="position:absolute;left:59.0px;top:128.0px;width:161.0px;height:1.0px;background:#b9c1c9"></div>
<div style="position:absolute;left:186.2px;top:102.2px;width:27.5px;height:24.6px;background:#e2e2e6;border:1.3px solid #8f9398;box-sizing:border-box"></div><svg style="position:absolute;left:186px;top:102px" width="28" height="25" viewBox="186 102 28 25"><ellipse cx="200" cy="112" rx="8.2" ry="7.3" fill="none" stroke="#e79aac" stroke-width="2.6" stroke-dasharray="2.6 1.1"/><ellipse cx="200" cy="112" rx="4.4" ry="4" fill="none" stroke="#edb0bd" stroke-width="1.1"/><rect x="189.5" y="121.9" width="22" height="1.5" fill="#2a2a30"/></svg>
<span class="t" style="left:62.0px;top:138.3px;font-size:7.5px;color:#1f2f62;font-weight:bold;transform:scaleX(0.979);">TUNE</span>
<span class="t" style="left:62.0px;top:159.8px;font-size:7.5px;color:#1f2f62;font-weight:bold;transform:scaleX(1.067);">GAIN</span>
<span class="t" style="left:62.0px;top:171.8px;font-size:7.5px;color:#1f2f62;font-weight:bold;transform:scaleX(0.973);">SEA</span>
<span class="t" style="left:62.0px;top:183.6px;font-size:7.5px;color:#1f2f62;font-weight:bold;transform:scaleX(1.090);">RAIN</span>
<div style="position:absolute;left:97.0px;top:140.0px;width:60.0px;height:6.0px;background:#2bd62b;border-radius:1px;box-shadow:inset 0 1px 0 #6fe86f, inset 0 -1px 0 #1fae1f"></div>
<div style="position:absolute;left:154.0px;top:141.0px;width:2.5px;height:4.5px;background:#b8f0b8"></div>
<div style="position:absolute;left:91.6px;top:137.0px;width:5.4px;height:10.8px;background:#e9eaeb;border:1px solid #8a8e94;border-radius:1.5px;box-sizing:border-box"></div>
<div class="b dis" style="left:174.4px;top:136.4px;width:27.1px;height:10.9px;font-size:7.5px;"><span style="">MAN</span></div>
<div style="position:absolute;left:92.0px;top:161.4px;width:65.5px;height:6.2px;background:#e9ebec;border:1px solid #b4b8bd;box-sizing:border-box;border-radius:1px"></div>
<div style="position:absolute;left:92.0px;top:161.8px;width:39.0px;height:5.4px;background:#2bd62b;box-shadow:inset 0 1px 0 #6fe86f"></div>
<div style="position:absolute;left:130.0px;top:159.0px;width:5.8px;height:10.8px;background:#dcdee0;border:1px solid #7f848a;border-radius:1.5px;box-sizing:border-box"></div>
<div style="position:absolute;left:92.0px;top:173.7px;width:65.5px;height:6.3px;background:#e9ebec;border:1px solid #b4b8bd;box-sizing:border-box;border-radius:1px"></div>
<div style="position:absolute;left:92.0px;top:174.2px;width:6.5px;height:5.4px;background:#2bd62b"></div>
<div style="position:absolute;left:97.3px;top:171.6px;width:5.7px;height:10.6px;background:#dcdee0;border:1px solid #7f848a;border-radius:1.5px;box-sizing:border-box"></div>
<div style="position:absolute;left:92.0px;top:185.0px;width:65.5px;height:6.4px;background:#e9ebec;border:1px solid #b4b8bd;box-sizing:border-box;border-radius:1px"></div>
<div style="position:absolute;left:91.6px;top:183.4px;width:5.4px;height:10.8px;background:#e9eaeb;border:1px solid #8a8e94;border-radius:1.5px;box-sizing:border-box"></div>
<div class="b rnd" style="left:173.8px;top:164.0px;width:27.7px;height:11.6px;font-size:9.5px;"><span style="transform:scaleX(0.842);">OFF</span></div>
<div class="b " style="left:62.0px;top:196.6px;width:22.0px;height:12.4px;font-size:9px;"><span style="transform:scaleX(0.800);">FTC</span></div>
<div class="b dis" style="left:62.0px;top:212.0px;width:32.6px;height:12.3px;font-size:8px;"><span style="">M1</span></div>
<div class="b " style="left:98.0px;top:212.0px;width:45.0px;height:12.3px;font-size:8px;"><span style="transform:scaleX(0.975);">SART OFF</span></div>
<div class="b " style="left:147.4px;top:212.0px;width:32.2px;height:12.3px;font-size:8px;"><span style="transform:scaleX(0.944);">IR ON</span></div>
<div class="b " style="left:182.6px;top:212.0px;width:35.4px;height:12.3px;font-size:8px;"><span style="transform:scaleX(0.939);">EXP OFF</span></div>
<div style="position:absolute;left:59.0px;top:227.0px;width:161.0px;height:1.0px;background:#b9c1c9"></div>
<div class="b " style="left:62.0px;top:230.8px;width:48.0px;height:17.6px;font-size:12px;"><span style="transform:scaleX(0.986);">RM(T)</span></div>
<div class="b dis" style="left:114.0px;top:230.8px;width:50.5px;height:17.6px;font-size:11px;"><span style="transform:scaleX(0.927);">STAB</span></div>
<div class="b " style="left:169.4px;top:230.8px;width:47.6px;height:17.6px;font-size:12px;"><span style="transform:scaleX(0.977);">N UP</span></div>
<div class="b " style="left:62.0px;top:252.0px;width:20.8px;height:18.0px;font-size:14px;"><span style="">+</span></div>
<span class="t" style="left:97.0px;top:255.4px;font-size:11.5px;color:#1f2f62;font-weight:bold;transform:scaleX(1.033);">RANGE 3.0 NM</span>
<div class="b " style="left:195.8px;top:252.0px;width:20.2px;height:18.0px;font-size:14px;"><span style="">-</span></div>
<div class="b " style="left:85.0px;top:274.0px;width:108.7px;height:19.0px;font-size:8px;"><span style="transform:scaleX(1.163);">RR 0.5 NM</span></div>
<div class="b " style="left:62.0px;top:296.5px;width:73.6px;height:13.5px;font-size:8px;"><span style="transform:scaleX(1.025);">OFF CENT</span></div>
<div class="b dis" style="left:142.5px;top:296.5px;width:73.5px;height:13.5px;font-size:8px;"><span style="transform:scaleX(1.014);">RESET TM</span></div>
<div style="position:absolute;left:59.0px;top:312.0px;width:161.0px;height:1.0px;background:#b9c1c9"></div>
<div class="b " style="left:61.7px;top:315.5px;width:48.3px;height:24.5px;font-size:9.5px;"><span style="transform:scaleX(1.018);line-height:11.2px;">MAP</span><span style="transform:scaleX(1.001);line-height:11.2px;">MENU</span></div>
<div class="b " style="left:114.0px;top:315.5px;width:48.4px;height:24.5px;font-size:9.5px;"><span style="transform:scaleX(0.947);line-height:11.2px;">PIL</span><span style="transform:scaleX(1.001);line-height:11.2px;">MENU</span></div>
<div class="b " style="left:166.8px;top:315.5px;width:50.2px;height:24.5px;font-size:9.5px;"><span style="transform:scaleX(0.972);line-height:11.2px;">EBL / VRM</span><span style="transform:scaleX(1.001);line-height:11.2px;">MENU</span></div>
<div class="b " style="left:62.0px;top:452.7px;width:153.0px;height:16.3px;font-size:8.7px;"><span style="transform:scaleX(1.121);">SHOW ETA + TTG</span></div>
<div class="b " style="left:62.0px;top:471.7px;width:153.0px;height:16.7px;font-size:8.7px;"><span style="transform:scaleX(1.101);">MOUSE PARK POSITION ON</span></div>
<div style="position:absolute;left:59.0px;top:509.0px;width:161.0px;height:1.0px;background:#bcc4cc"></div>
<div style="position:absolute;left:149.5px;top:511.0px;width:1.0px;height:91.0px;background:#bcc4cc"></div>
<span class="t" style="left:171.0px;top:513.2px;font-size:7.5px;color:#1f2f62;font-weight:bold;transform:scaleX(1.079);">XCVR1</span>
<span class="t" style="left:170.0px;top:524.6px;font-size:7.5px;color:#1f2f62;font-weight:bold;transform:scaleX(1.028);">X-BAND</span>
<span class="t" style="left:172.0px;top:537.3px;font-size:7.5px;color:#1f2f62;font-weight:bold;transform:scaleX(1.063);">SLAVE</span>
<span class="t" style="left:62.0px;top:529.7px;font-size:7.6px;color:#1f2f62;font-weight:bold;transform:scaleX(1.067);">BRG</span>
<span class="t" style="left:91.0px;top:529.7px;font-size:7.6px;color:#1f2f62;font-weight:bold;transform:scaleX(0.999);">359.1</span>
<span class="t" style="left:120.0px;top:529.7px;font-size:7.6px;color:#1f2f62;font-weight:bold;transform:scaleX(1.021);">° T</span>
<span class="t" style="left:62.0px;top:542.9px;font-size:7.6px;color:#1f2f62;font-weight:bold;transform:scaleX(1.040);">DIST</span>
<span class="t" style="left:91.0px;top:542.9px;font-size:7.6px;color:#1f2f62;font-weight:bold;transform:scaleX(0.999);">1.912</span>
<span class="t" style="left:120.0px;top:542.9px;font-size:7.6px;color:#1f2f62;font-weight:bold;transform:scaleX(1.101);">NM</span>
<span class="t" style="left:62.0px;top:554.5px;font-size:7.6px;color:#1f2f62;font-weight:bold;transform:scaleX(1.056);">LAT</span>
<span class="t" style="left:86.5px;top:554.5px;font-size:7.6px;color:#1f2f62;font-weight:bold;transform:scaleX(1.217);">054 30.884 N</span>
<span class="t" style="left:62.0px;top:565.5px;font-size:7.6px;color:#1f2f62;font-weight:bold;transform:scaleX(1.060);">LON</span>
<span class="t" style="left:87.0px;top:565.5px;font-size:7.6px;color:#1f2f62;font-weight:bold;transform:scaleX(1.217);">010 03.828 E</span>
<span class="t" style="left:62.0px;top:578.5px;font-size:7.6px;color:#1f2f62;font-weight:bold;transform:scaleX(1.026);">ETA</span>
<span class="t" style="left:91.0px;top:578.5px;font-size:7.6px;color:#1f2f62;font-weight:bold;transform:scaleX(1.532);">**:**</span>
<span class="t" style="left:125.0px;top:578.5px;font-size:7.6px;color:#1f2f62;font-weight:bold;transform:scaleX(1.115);">H:M</span>
<span class="t" style="left:62.0px;top:590.9px;font-size:7.6px;color:#1f2f62;font-weight:bold;transform:scaleX(0.988);">TTG</span>
<span class="t" style="left:91.0px;top:590.9px;font-size:7.6px;color:#1f2f62;font-weight:bold;transform:scaleX(1.532);">**:**</span>
<span class="t" style="left:125.0px;top:590.9px;font-size:7.6px;color:#1f2f62;font-weight:bold;transform:scaleX(1.115);">H:M</span>
<div style="position:absolute;left:59.0px;top:603.0px;width:161.0px;height:1.0px;background:#bcc4cc"></div>
<div class="b " style="left:62.0px;top:607.8px;width:23.0px;height:15.8px;font-size:7.5px;"><span style="transform:scaleX(0.881);">CENT</span></div>
<div class="b prs" style="left:87.6px;top:607.8px;width:19.9px;height:15.8px;font-size:7.5px;"><span style="transform:scaleX(0.887);">EBL1</span></div>
<span class="t" style="left:112.7px;top:611.4px;font-size:7.6px;color:#1f2f62;font-weight:bold;transform:scaleX(1.068);">357.0</span>
<div class="b " style="left:141.0px;top:607.8px;width:7.6px;height:15.8px;font-size:7px;"><span style="transform:scaleX(0.954);">°R</span></div>
<div class="b prs" style="left:149.7px;top:607.8px;width:22.3px;height:15.8px;font-size:7.5px;"><span style="transform:scaleX(0.936);">VRM1</span></div>
<span class="t" style="left:179.6px;top:611.4px;font-size:7.6px;color:#1f2f62;font-weight:bold;transform:scaleX(1.073);">2.065</span>
<span class="t" style="left:207.0px;top:611.4px;font-size:7.6px;color:#1f2f62;font-weight:bold;transform:scaleX(0.897);">NM</span>
<div style="position:absolute;left:59.0px;top:627.0px;width:161.0px;height:1.0px;background:#bcc4cc"></div>
<div class="b dis" style="left:62.0px;top:630.7px;width:23.0px;height:15.8px;font-size:7.5px;"><span style="transform:scaleX(0.881);">CENT</span></div>
<div class="b " style="left:87.6px;top:630.7px;width:19.9px;height:15.8px;font-size:7.5px;"><span style="transform:scaleX(0.887);">EBL2</span></div>
<div class="b " style="left:141.0px;top:630.7px;width:7.6px;height:15.8px;font-size:7px;"><span style="transform:scaleX(0.954);">°R</span></div>
<div class="b " style="left:149.7px;top:630.7px;width:22.3px;height:15.8px;font-size:7.5px;"><span style="transform:scaleX(0.936);">VRM2</span></div>
<span class="t" style="left:207.0px;top:634.5px;font-size:7.6px;color:#1f2f62;font-weight:bold;transform:scaleX(0.897);">NM</span>
<div style="position:absolute;left:59.0px;top:650.0px;width:161.0px;height:1.0px;background:#b9c1c9"></div>
<span class="t" style="left:857.6px;top:103.2px;font-size:12px;color:#1f2f62;font-weight:bold;transform:scaleX(1.102);">HDG</span>
<div style="position:absolute;left:853.0px;top:117.5px;width:39.0px;height:8.7px;background:#f6cfa8;border:1px solid #f0a060;border-radius:2px;box-sizing:border-box"></div>
<span class="t" style="left:855.0px;top:118.0px;font-size:7.5px;color:#f0862a;font-weight:bold;transform:scaleX(0.976);">GYRO1(T)</span>
<span class="t" style="left:895.5px;top:98.5px;font-size:30px;color:#1f2f62;font-weight:bold;transform:scaleX(1.081);letter-spacing:-.5px;">000</span>
<span class="t" style="left:949.0px;top:109.8px;font-size:17.5px;color:#1f2f62;font-weight:bold;transform:scaleX(1.218);">.0</span>
<span class="t" style="left:970.5px;top:101.5px;font-size:13px;color:#1f2f62;font-weight:bold;transform:scaleX(1.441);">°</span>
<div class="b rnd" style="left:981.7px;top:115.6px;width:37.9px;height:11.4px;font-size:8.5px;"><span style="transform:scaleX(1.128);">AUTO</span></div>
<span class="t" style="left:855.0px;top:130.8px;font-size:11.5px;color:#1f2f62;font-weight:bold;transform:scaleX(1.107);">COG</span>
<span class="t" style="left:910.0px;top:131.6px;font-size:10px;color:#1f2f62;font-weight:bold;transform:scaleX(1.427);">===.=°</span>
<span class="t" style="left:855.0px;top:145.8px;font-size:12.5px;color:#1f2f62;font-weight:bold;transform:scaleX(1.043);">SOG</span>
<span class="t" style="left:922.0px;top:145.8px;font-size:12.5px;color:#1f2f62;font-weight:normal;transform:scaleX(1.093);">0.0</span>
<span class="t" style="left:947.7px;top:146.1px;font-size:12px;color:#1f2f62;font-weight:bold;transform:scaleX(1.092);">kn</span>
<span class="t" style="left:855.0px;top:160.4px;font-size:9px;color:#1f2f62;font-weight:bold;transform:scaleX(1.028);">SET</span>
<span class="t" style="left:919.0px;top:160.4px;font-size:9px;color:#1f2f62;font-weight:bold;transform:scaleX(1.077);">===</span>
<span class="t" style="left:950.0px;top:159.2px;font-size:8px;color:#1f2f62;font-weight:bold;">°</span>
<span class="t" style="left:855.0px;top:172.2px;font-size:9px;color:#1f2f62;font-weight:bold;transform:scaleX(1.057);">DRIFT</span>
<span class="t" style="left:922.7px;top:172.2px;font-size:9px;color:#1f2f62;font-weight:bold;transform:scaleX(1.176);">=.=</span>
<span class="t" style="left:947.0px;top:171.6px;font-size:10px;color:#1f2f62;font-weight:normal;transform:scaleX(1.231);">kn</span>
<span class="t" style="left:855.0px;top:194.2px;font-size:8.5px;color:#1f2f62;font-weight:bold;transform:scaleX(0.962);">POS:</span>
<span class="t" style="left:887.0px;top:187.2px;font-size:8.5px;color:#1f2f62;font-weight:bold;transform:scaleX(1.159);">N 54° 28.912'</span>
<span class="t" style="left:887.0px;top:200.4px;font-size:8.5px;color:#1f2f62;font-weight:bold;transform:scaleX(1.188);">E 010° 03.880'</span>
<div class="b big" style="left:967.6px;top:132.0px;width:52.0px;height:25.0px;font-size:7.5px;color:#f08a28;"><span style="transform:scaleX(1.000);">GPS1(BT)</span></div>
<div class="b big red" style="left:967.6px;top:160.5px;width:52.0px;height:21.5px;font-size:8px;color:#e0a090;"><span style="transform:scaleX(1.500);">---</span></div>
<div class="b big" style="left:967.6px;top:185.0px;width:52.0px;height:26.5px;font-size:7.5px;color:#f08a28;"><span style="transform:scaleX(0.981);">GPS1 D</span></div>
<div style="position:absolute;left:853.0px;top:214.0px;width:169.0px;height:1.0px;background:#b9c1c9"></div>
<div class="b rnd" style="left:855.0px;top:218.0px;width:24.6px;height:9.2px;font-size:8.5px;"><span style="transform:scaleX(0.970);">(REL)</span></div>
<span class="t" style="left:883.7px;top:217.8px;font-size:9px;color:#1f2f62;font-weight:bold;transform:scaleX(1.044);">VECTOR</span>
<span class="t" style="left:936.0px;top:217.8px;font-size:9px;color:#1f2f62;font-weight:bold;transform:scaleX(1.039);">3.0</span>
<span class="t" style="left:960.0px;top:217.5px;font-size:9.5px;color:#1f2f62;font-weight:bold;transform:scaleX(1.006);">min</span>
<div class="b " style="left:981.7px;top:217.3px;width:37.0px;height:26.7px;font-size:11px;"><span style="transform:scaleX(1.000);line-height:13px;">TGT</span><span style="transform:scaleX(0.957);line-height:13px;">MENU</span></div>
<span class="t" style="left:855.0px;top:232.9px;font-size:8.5px;color:#1f2f62;font-weight:bold;transform:scaleX(0.957);">PAST P INT</span>
<div class="b dis rnd" style="left:904.8px;top:231.4px;width:13.5px;height:9.6px;font-size:7px;"><span style="">&lt;</span></div>
<div class="b dis rnd" style="left:945.6px;top:231.4px;width:12.4px;height:9.6px;font-size:7px;"><span style="">&gt;</span></div>
<span class="t" style="left:960.0px;top:232.4px;font-size:9.5px;color:#1f2f62;font-weight:bold;transform:scaleX(1.006);">min</span>
<span class="t" style="left:855.0px;top:247.7px;font-size:8.5px;color:#1f2f62;font-weight:bold;transform:scaleX(0.965);">PAST P PER</span>
<div class="b dis rnd" style="left:905.5px;top:246.0px;width:12.8px;height:10.0px;font-size:7px;"><span style="">&lt;</span></div>
<span class="t" style="left:922.0px;top:247.2px;font-size:9.5px;color:#1f2f62;font-weight:bold;transform:scaleX(1.026);">OFF</span>
<div class="b rnd" style="left:945.6px;top:246.0px;width:12.4px;height:10.0px;font-size:7px;"><span style="">&gt;</span></div>
<span class="t" style="left:960.0px;top:247.2px;font-size:9.5px;color:#1f2f62;font-weight:bold;transform:scaleX(1.006);">min</span>
<div class="b " style="left:981.7px;top:247.0px;width:37.0px;height:26.3px;font-size:11px;"><span style="transform:scaleX(1.000);line-height:13px;">TGT</span><span style="transform:scaleX(1.027);line-height:13px;">INFO</span></div>
<span class="t" style="left:857.6px;top:263.7px;font-size:8.5px;color:#1f2f62;font-weight:bold;transform:scaleX(1.128);">TRUE TRAILS</span>
<div class="b rnd" style="left:927.0px;top:263.0px;width:30.0px;height:9.4px;font-size:8.5px;"><span style="transform:scaleX(1.000);">OFF</span></div>
<span class="t" style="left:960.0px;top:263.2px;font-size:9.5px;color:#1f2f62;font-weight:bold;transform:scaleX(1.006);">min</span>
<span class="t" style="left:904.0px;top:278.3px;font-size:9.5px;color:#1f2f62;font-weight:bold;transform:scaleX(1.036);">TARGET INFO</span>
<div class="b rnd" style="left:879.6px;top:292.7px;width:38.7px;height:10.0px;font-size:8.5px;"><span style="transform:scaleX(1.010);">RADAR</span></div>
<div class="b rnd" style="left:922.4px;top:292.7px;width:38.2px;height:10.0px;font-size:8.5px;"><span style="transform:scaleX(1.010);">RADAR</span></div>
<div class="b rnd" style="left:964.0px;top:292.7px;width:38.8px;height:10.0px;font-size:8.5px;"><span style="transform:scaleX(1.010);">RADAR</span></div>
<span class="t" style="left:853.0px;top:306.7px;font-size:8px;color:#1f2f62;font-weight:bold;transform:scaleX(1.073);">ID</span>
<span class="t" style="left:907.0px;top:307.0px;font-size:7.5px;color:#3d4a74;font-weight:bold;transform:scaleX(1.065);">===</span>
<span class="t" style="left:947.0px;top:307.0px;font-size:7.5px;color:#3d4a74;font-weight:bold;transform:scaleX(1.065);">===</span>
<span class="t" style="left:989.0px;top:307.0px;font-size:7.5px;color:#3d4a74;font-weight:bold;transform:scaleX(1.065);">===</span>
<span class="t" style="left:853.0px;top:318.2px;font-size:8px;color:#1f2f62;font-weight:bold;transform:scaleX(0.938);">STAT</span>
<span class="t" style="left:899.0px;top:318.5px;font-size:7.5px;color:#3d4a74;font-weight:bold;transform:scaleX(0.943);">- -- - - -</span>
<span class="t" style="left:939.0px;top:318.5px;font-size:7.5px;color:#3d4a74;font-weight:bold;transform:scaleX(0.943);">- -- - - -</span>
<span class="t" style="left:981.0px;top:318.5px;font-size:7.5px;color:#3d4a74;font-weight:bold;transform:scaleX(0.943);">- -- - - -</span>
<span class="t" style="left:853.0px;top:329.2px;font-size:8px;color:#1f2f62;font-weight:bold;transform:scaleX(0.928);">R CRS</span>
<span class="t" style="left:900.0px;top:329.5px;font-size:7.5px;color:#3d4a74;font-weight:bold;transform:scaleX(1.071);">===.=</span>
<span class="t" style="left:940.0px;top:329.5px;font-size:7.5px;color:#3d4a74;font-weight:bold;transform:scaleX(1.071);">===.=</span>
<span class="t" style="left:982.0px;top:329.5px;font-size:7.5px;color:#3d4a74;font-weight:bold;transform:scaleX(1.071);">===.=</span>
<span class="t" style="left:1017.0px;top:327.8px;font-size:7px;color:#1f2f62;font-weight:bold;">°</span>
<span class="t" style="left:853.0px;top:339.4px;font-size:8px;color:#1f2f62;font-weight:bold;transform:scaleX(0.945);">R SPD</span>
<span class="t" style="left:900.0px;top:339.7px;font-size:7.5px;color:#3d4a74;font-weight:bold;transform:scaleX(1.071);">===.=</span>
<span class="t" style="left:940.0px;top:339.7px;font-size:7.5px;color:#3d4a74;font-weight:bold;transform:scaleX(1.071);">===.=</span>
<span class="t" style="left:982.0px;top:339.7px;font-size:7.5px;color:#3d4a74;font-weight:bold;transform:scaleX(1.071);">===.=</span>
<span class="t" style="left:1011.0px;top:339.7px;font-size:7.5px;color:#1f2f62;font-weight:normal;transform:scaleX(1.262);">kn</span>
<span class="t" style="left:853.0px;top:349.9px;font-size:8px;color:#1f2f62;font-weight:bold;transform:scaleX(1.013);">DIST</span>
<span class="t" style="left:900.0px;top:350.2px;font-size:7.5px;color:#3d4a74;font-weight:bold;transform:scaleX(1.071);">===.=</span>
<span class="t" style="left:940.0px;top:350.2px;font-size:7.5px;color:#3d4a74;font-weight:bold;transform:scaleX(1.071);">===.=</span>
<span class="t" style="left:982.0px;top:350.2px;font-size:7.5px;color:#3d4a74;font-weight:bold;transform:scaleX(1.071);">===.=</span>
<span class="t" style="left:1009.0px;top:349.9px;font-size:8px;color:#1f2f62;font-weight:bold;transform:scaleX(0.964);">NM</span>
<span class="t" style="left:853.0px;top:361.2px;font-size:8px;color:#1f2f62;font-weight:normal;transform:scaleX(0.950);">TBRG</span>
<span class="t" style="left:900.0px;top:361.5px;font-size:7.5px;color:#3d4a74;font-weight:bold;transform:scaleX(1.071);">===.=</span>
<span class="t" style="left:940.0px;top:361.5px;font-size:7.5px;color:#3d4a74;font-weight:bold;transform:scaleX(1.071);">===.=</span>
<span class="t" style="left:982.0px;top:361.5px;font-size:7.5px;color:#3d4a74;font-weight:bold;transform:scaleX(1.071);">===.=</span>
<span class="t" style="left:1017.0px;top:359.8px;font-size:7px;color:#1f2f62;font-weight:bold;">°</span>
<span class="t" style="left:853.0px;top:372.3px;font-size:8px;color:#1f2f62;font-weight:bold;transform:scaleX(1.053);">CPA</span>
<span class="t" style="left:900.0px;top:372.6px;font-size:7.5px;color:#3d4a74;font-weight:bold;transform:scaleX(1.071);">===.=</span>
<span class="t" style="left:940.0px;top:372.6px;font-size:7.5px;color:#3d4a74;font-weight:bold;transform:scaleX(1.071);">===.=</span>
<span class="t" style="left:982.0px;top:372.6px;font-size:7.5px;color:#3d4a74;font-weight:bold;transform:scaleX(1.071);">===.=</span>
<span class="t" style="left:1009.0px;top:372.3px;font-size:8px;color:#1f2f62;font-weight:bold;transform:scaleX(0.964);">NM</span>
<span class="t" style="left:853.0px;top:382.7px;font-size:8px;color:#1f2f62;font-weight:bold;transform:scaleX(0.935);">TCPA</span>
<span class="t" style="left:907.0px;top:383.0px;font-size:7.5px;color:#3d4a74;font-weight:bold;transform:scaleX(1.065);">===</span>
<span class="t" style="left:947.0px;top:383.0px;font-size:7.5px;color:#3d4a74;font-weight:bold;transform:scaleX(1.065);">===</span>
<span class="t" style="left:989.0px;top:383.0px;font-size:7.5px;color:#3d4a74;font-weight:bold;transform:scaleX(1.065);">===</span>
<span class="t" style="left:1007.0px;top:383.0px;font-size:7.5px;color:#1f2f62;font-weight:normal;transform:scaleX(1.158);">min</span>
<span class="t" style="left:853.0px;top:393.4px;font-size:8px;color:#1f2f62;font-weight:bold;transform:scaleX(0.989);">BCR</span>
<span class="t" style="left:900.0px;top:393.7px;font-size:7.5px;color:#3d4a74;font-weight:bold;transform:scaleX(1.071);">===.=</span>
<span class="t" style="left:940.0px;top:393.7px;font-size:7.5px;color:#3d4a74;font-weight:bold;transform:scaleX(1.071);">===.=</span>
<span class="t" style="left:982.0px;top:393.7px;font-size:7.5px;color:#3d4a74;font-weight:bold;transform:scaleX(1.071);">===.=</span>
<span class="t" style="left:1009.0px;top:393.4px;font-size:8px;color:#1f2f62;font-weight:bold;transform:scaleX(0.964);">NM</span>
<span class="t" style="left:853.0px;top:405.7px;font-size:8px;color:#1f2f62;font-weight:normal;transform:scaleX(0.949);">BCT</span>
<span class="t" style="left:907.0px;top:406.0px;font-size:7.5px;color:#3d4a74;font-weight:bold;transform:scaleX(1.065);">===</span>
<span class="t" style="left:947.0px;top:406.0px;font-size:7.5px;color:#3d4a74;font-weight:bold;transform:scaleX(1.065);">===</span>
<span class="t" style="left:989.0px;top:406.0px;font-size:7.5px;color:#3d4a74;font-weight:bold;transform:scaleX(1.065);">===</span>
<span class="t" style="left:1007.0px;top:406.0px;font-size:7.5px;color:#1f2f62;font-weight:normal;transform:scaleX(1.158);">min</span>
<div style="position:absolute;left:853.0px;top:439.5px;width:169.0px;height:1.0px;background:#b9c1c9"></div>
<div class="b " style="left:855.5px;top:443.8px;width:59.3px;height:16.2px;font-size:10px;"><span style="transform:scaleX(1.099);">HL ON</span></div>
<div class="b " style="left:917.5px;top:443.8px;width:60.7px;height:16.2px;font-size:10px;"><span style="transform:scaleX(1.136);">FILT OFF</span></div>
<div class="b " style="left:855.5px;top:463.7px;width:59.3px;height:15.8px;font-size:9.5px;"><span style="transform:scaleX(1.174);">SYM ON</span></div>
<div class="b " style="left:917.5px;top:463.7px;width:60.7px;height:15.8px;font-size:8.5px;"><span style="transform:scaleX(1.109);">ASSOC OFF</span></div>
<div class="b big" style="left:981.7px;top:443.8px;width:37.9px;height:34.2px;font-size:10.5px;"><span style="transform:scaleX(1.097);">FUNC</span></div>
<span class="t" style="left:855.8px;top:487.9px;font-size:8px;color:#1f2f62;font-weight:bold;transform:scaleX(1.167);">UTC</span>
<span class="t" style="left:890.0px;top:487.9px;font-size:8px;color:#1f2f62;font-weight:bold;transform:scaleX(1.014);">2015-03-14  10:59:22</span>
<div class="b big" style="left:981.7px;top:482.0px;width:37.9px;height:34.5px;font-size:8.5px;"><span style="transform:scaleX(1.108);line-height:11.5px;">ARPA</span><span style="transform:scaleX(1.039);line-height:11.5px;">TRIAL</span></div>
<div style="position:absolute;left:856.0px;top:520.0px;width:122.0px;height:1.0px;background:#bcc4cc"></div>
<span class="t" style="left:855.0px;top:525.9px;font-size:8.5px;color:#1f2f62;font-weight:bold;transform:scaleX(1.202);">ATON</span>
<span class="t" style="left:924.0px;top:525.9px;font-size:8.5px;color:#1f2f62;font-weight:bold;transform:scaleX(1.176);">OFF</span>
<span class="t" style="left:855.0px;top:538.4px;font-size:8.5px;color:#1f2f62;font-weight:bold;transform:scaleX(1.144);">AIS FILT RNG</span>
<span class="t" style="left:926.8px;top:538.4px;font-size:8.5px;color:#1f2f62;font-weight:bold;transform:scaleX(1.160);">12.0</span>
<span class="t" style="left:961.7px;top:538.4px;font-size:8.5px;color:#1f2f62;font-weight:bold;transform:scaleX(1.156);">NM</span>
<span class="t" style="left:855.0px;top:551.0px;font-size:8.5px;color:#1f2f62;font-weight:bold;transform:scaleX(1.096);">CPA</span>
<span class="t" style="left:927.8px;top:551.0px;font-size:8.5px;color:#1f2f62;font-weight:bold;transform:scaleX(1.116);">2.0</span>
<span class="t" style="left:961.7px;top:551.0px;font-size:8.5px;color:#1f2f62;font-weight:bold;transform:scaleX(1.156);">NM</span>
<span class="t" style="left:855.0px;top:563.4px;font-size:8.5px;color:#1f2f62;font-weight:bold;transform:scaleX(1.110);">TCPA</span>
<span class="t" style="left:916.0px;top:563.4px;font-size:8.5px;color:#1f2f62;font-weight:bold;transform:scaleX(1.163);">00:12 hh:mm</span>
<div style="position:absolute;left:855.9px;top:576.0px;width:106.8px;height:24.3px;background:#f0841e"></div>
<span class="t" style="left:857.5px;top:582.6px;font-size:11px;color:#fbe3c8;font-weight:bold;transform:scaleX(0.981);">M</span>
<span class="t" style="left:883.0px;top:578.5px;font-size:7.5px;color:#fbe0c2;font-weight:bold;transform:scaleX(1.064);">1 of 26 - CCRS</span>
<span class="t" style="left:883.0px;top:590.5px;font-size:7.5px;color:#fbe0c2;font-weight:bold;transform:scaleX(1.064);">2015-03-14 12:58:45</span>
<span class="t" style="left:857.0px;top:602.8px;font-size:7.8px;color:#f0923c;font-weight:bold;transform:scaleX(1.031);">POSITION: POOR</span>
<span class="t" style="left:857.0px;top:614.6px;font-size:7.8px;color:#f0923c;font-weight:bold;transform:scaleX(1.010);">INTEGRITY</span>
<div class="b dis" style="left:964.4px;top:576.0px;width:11.0px;height:34.0px;font-size:7px;"><span style="">▲</span></div>
<div class="b " style="left:964.4px;top:612.0px;width:11.0px;height:34.0px;font-size:7px;"><span style=""></span></div>
<svg style="position:absolute;left:966px;top:626px" width="8" height="8"><path d="M0.5 1 L7.5 1 L4 7Z" fill="#1f2f62"/></svg>
<div class="b dis big" style="left:981.0px;top:519.7px;width:38.9px;height:33.3px;font-size:9px;"><span style="transform:scaleX(1.080);line-height:12px;">SEA</span><span style="transform:scaleX(1.079);line-height:12px;">SCOUT</span></div>
<div class="b big" style="left:981.0px;top:557.0px;width:38.9px;height:34.0px;font-size:10.5px;"><span style="transform:scaleX(1.028);">AIS</span></div>
<div class="b big" style="left:981.0px;top:595.0px;width:38.9px;height:34.0px;font-size:9.5px;"><span style="transform:scaleX(1.053);">CHART</span></div>
<div class="b big" style="left:981.0px;top:633.0px;width:38.9px;height:34.0px;font-size:10.5px;"><span style="transform:scaleX(0.969);">TX</span></div>
<div class="b " style="left:858.0px;top:651.5px;width:69.0px;height:13.5px;font-size:7px;"><span style=""></span></div>
</div>
</div>
<div id="status"><span style="position:absolute;left:2px;top:5px;font-size:11px;transform:scaleX(0.943);transform-origin:0 50%;display:inline-block;">Ready</span><i class="sp" style="left:955px;width:24px"></i><i class="sp" style="left:982px;width:32px"></i><span style="position:absolute;left:986px;top:5px;font-size:11px">NUM</span><i class="sp" style="left:1017px;width:29px"></i><svg style="position:absolute;left:1050px;top:8px" width="12" height="12"><path d="M11 1 L1 11 M11 5 L5 11 M11 9 L9 11" stroke="#9a9a9a" stroke-width="1.2"/></svg></div>
</div><div id="cl2"></div>
<div id="bframe"></div>
</body></html>
